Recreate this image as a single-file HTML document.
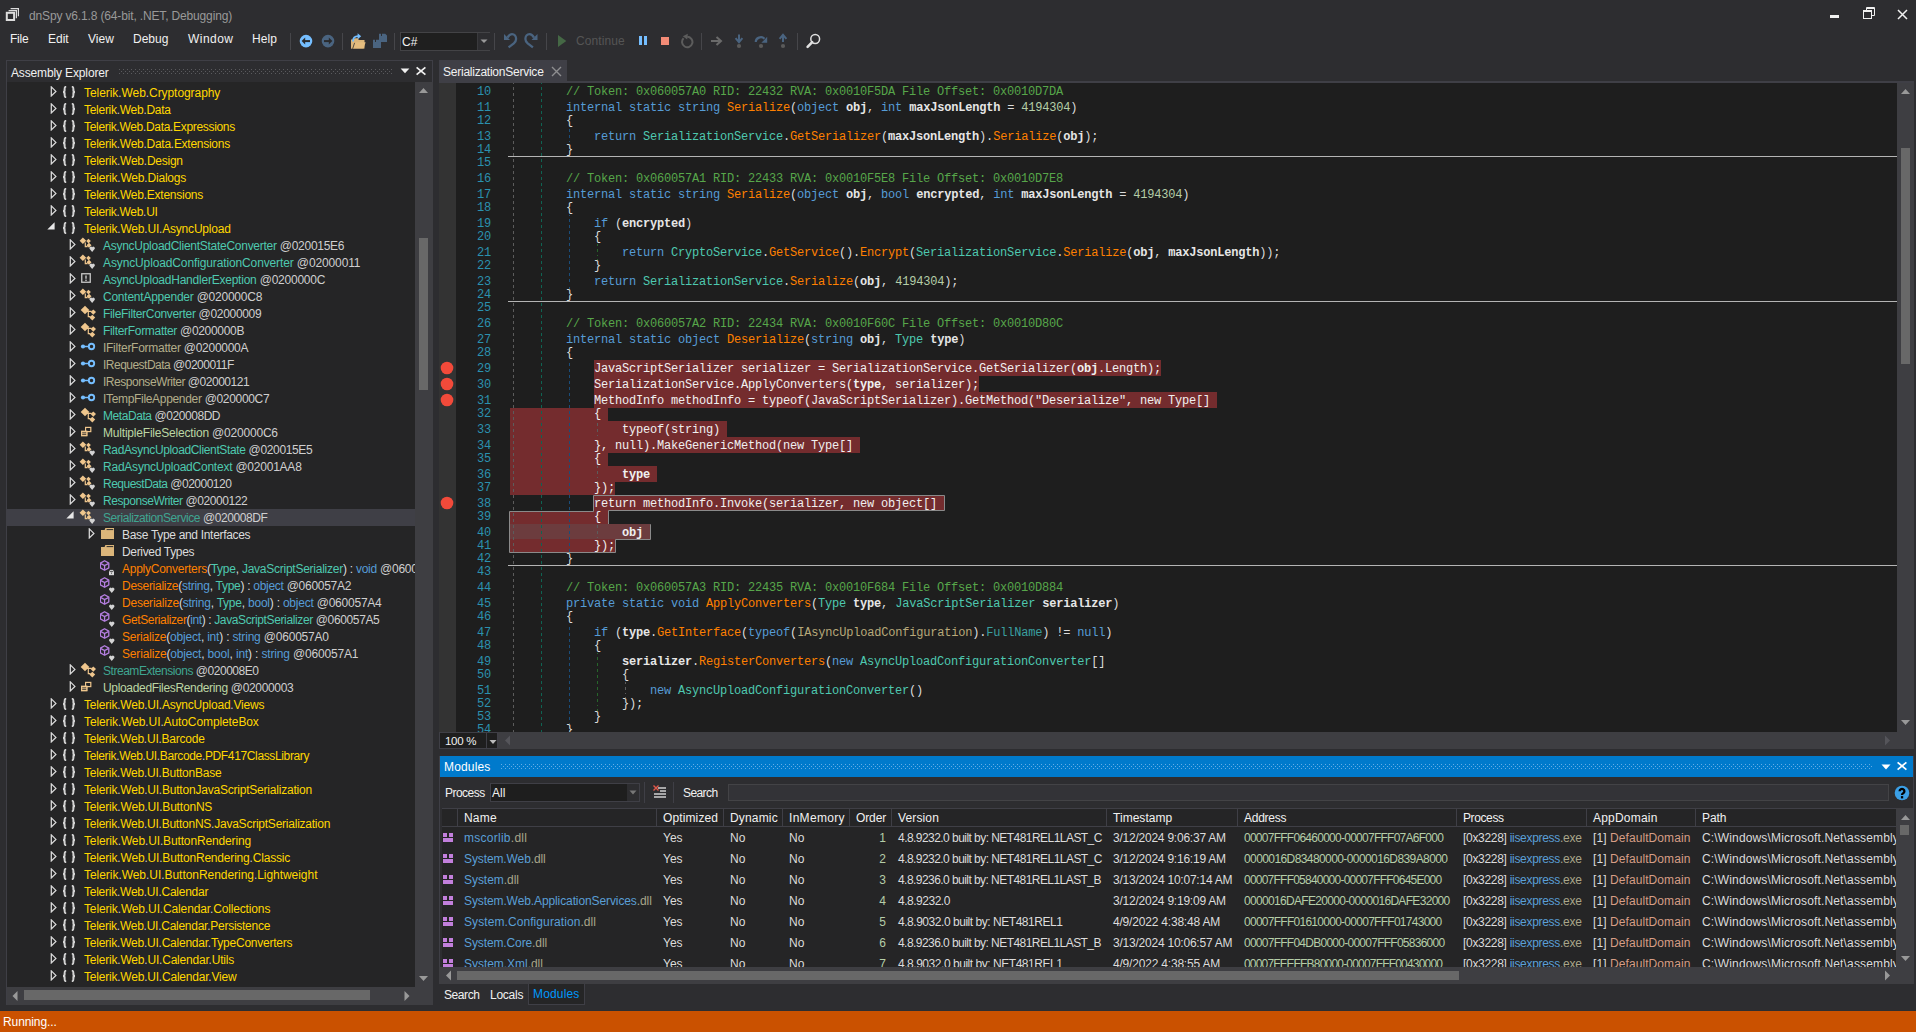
<!DOCTYPE html>
<html><head><meta charset="utf-8"><style>
html,body{margin:0;padding:0;}
body{width:1916px;height:1032px;overflow:hidden;position:relative;background:#2d2d30;font-family:'Liberation Sans', sans-serif;font-size:12px;}
div,svg{position:absolute;}
.t{white-space:pre;line-height:14px;}
</style></head><body>
<svg style="left:5px;top:7px;" width="16" height="16" viewBox="0 0 16 16"><path d="M3.6 3.6H11.4V11.2M5.6 1.6H13.4V9.2" fill="none" stroke="#dcdcdc" stroke-width="1.2"/><rect x="1.8" y="5.8" width="7.3" height="7.2" fill="none" stroke="#dcdcdc" stroke-width="2"/></svg><div class="t" style="top:9px;color:#999999;left:29px;letter-spacing:-0.151px;">dnSpy v6.1.8 (64-bit, .NET, Debugging)</div><div style="left:1830px;top:15px;width:9px;height:3px;background:#f1f1f1;"></div><svg style="left:1863px;top:7px;" width="12" height="12" viewBox="0 0 12 12"><path d="M3.5 3.5V0.5h8v8h-3" fill="none" stroke="#f1f1f1" stroke-width="1"/><rect x="0.5" y="3.5" width="8" height="8" fill="none" stroke="#f1f1f1" stroke-width="1"/><path d="M1 4.5h7M4 1.5h7" stroke="#f1f1f1" stroke-width="1"/></svg><svg style="left:1897px;top:9px;" width="11" height="11" viewBox="0 0 11 11"><path d="M1 1L10 10M10 1L1 10" stroke="#f1f1f1" stroke-width="1.5"/></svg><div class="t" style="top:32px;color:#f1f1f1;left:10px;letter-spacing:-0.212px;">File</div><div class="t" style="top:32px;color:#f1f1f1;left:48px;letter-spacing:-0.026px;">Edit</div><div class="t" style="top:32px;color:#f1f1f1;left:88px;letter-spacing:0.036px;">View</div><div class="t" style="top:32px;color:#f1f1f1;left:133px;letter-spacing:-0.015px;">Debug</div><div class="t" style="top:32px;color:#f1f1f1;left:188px;letter-spacing:0.464px;">Window</div><div class="t" style="top:32px;color:#f1f1f1;left:252px;letter-spacing:0.073px;">Help</div><div style="left:290px;top:33px;width:1px;height:17px;background:#46464a;"></div><div style="left:342px;top:33px;width:1px;height:17px;background:#46464a;"></div><div style="left:394px;top:33px;width:1px;height:17px;background:#46464a;"></div><div style="left:494px;top:33px;width:1px;height:17px;background:#46464a;"></div><div style="left:546px;top:33px;width:1px;height:17px;background:#46464a;"></div><div style="left:701px;top:33px;width:1px;height:17px;background:#46464a;"></div><div style="left:797px;top:33px;width:1px;height:17px;background:#46464a;"></div><svg style="left:299px;top:34px;" width="14" height="14" viewBox="0 0 14 14"><circle cx="7" cy="7.1" r="6.3" fill="#75beff"/><path d="M11 7.1H5" stroke="#2a2a2c" stroke-width="2"/><path d="M2.6 7.1L6.2 3.6V10.6z" fill="#2a2a2c"/></svg><svg style="left:321px;top:34px;" width="14" height="14" viewBox="0 0 14 14"><circle cx="7" cy="7.1" r="6.3" fill="#4a6480"/><path d="M3 7.1H9" stroke="#2a2a2c" stroke-width="2"/><path d="M11.4 7.1L7.8 3.6V10.6z" fill="#2a2a2c"/></svg><svg style="left:350px;top:32px;" width="17" height="18" viewBox="0 0 17 18"><path d="M1 7.5H3.5L5 6.2H8.5V8H14.5V16.5H1z" fill="#dcb67a"/><path d="M1.2 16.5L3.4 10.2H15.6L13.6 16.5z" fill="#e5bd7f"/><path d="M2.6 16.8L4.6 10.8" stroke="#2d2d30" stroke-width="0.8"/><path d="M3 9.5C3 6 5 4.2 8.2 4.2" fill="none" stroke="#75beff" stroke-width="1.8"/><path d="M7.6 1.2L11.2 4.2L7.6 7.2z" fill="#75beff"/></svg><svg style="left:372px;top:33px;" width="17" height="17" viewBox="0 0 17 17"><path d="M7 0.8H9V3H10V0.8H13.2L15 2.6V9H7z" fill="#4a6480"/><path d="M1 6.8H3V9H4V6.8H7.2L9 8.6V15H1z" fill="#4a6480"/></svg><div style="left:400px;top:32px;width:88px;height:17px;background:#1f1f1f;border:1px solid #434346;"></div><div style="left:477px;top:33px;width:12px;height:17px;background:#2d2d30;border-left:1px solid #3a3a3d;"></div><svg style="left:480px;top:38px;" width="8" height="6" viewBox="0 0 8 6"><path d="M0.5 1.5h7L4 5z" fill="#999"/></svg><div class="t" style="top:35px;color:#f1f1f1;left:402px;">C#</div><svg style="left:502px;top:30px;" width="18" height="20" viewBox="0 0 18 20"><path d="M2 4V10H8z" fill="#4a6480"/><path d="M5.5 7.6C6.8 5.3 8.5 4.2 10 4.2C12.4 4.2 14.1 6.2 14.1 9C14.1 10.8 13.3 12 11.8 13.3L6.6 17.4" fill="none" stroke="#4a6480" stroke-width="2.3"/></svg><svg style="left:521px;top:30px;" width="18" height="20" viewBox="0 0 18 20"><g transform="translate(18,0) scale(-1,1)"><path d="M1.5 4V10H7.5z" fill="#4a6480"/><path d="M5 7.6C6.3 5.3 8 4.2 9.5 4.2C11.9 4.2 13.6 6.2 13.6 9C13.6 10.8 12.8 12 11.3 13.3L6.1 17.4" fill="none" stroke="#4a6480" stroke-width="2.3"/></g></svg><svg style="left:557px;top:35px;" width="10" height="12" viewBox="0 0 10 12"><path d="M1 0L9.3 6L1 12z" fill="#456845"/></svg><div class="t" style="top:34px;color:#555555;left:576px;letter-spacing:0.081px;">Continue</div><div style="left:639px;top:36px;width:3px;height:9px;background:#75beff;"></div><div style="left:644px;top:36px;width:3px;height:9px;background:#75beff;"></div><div style="left:661px;top:37px;width:8px;height:8px;background:#f38b76;"></div><svg style="left:680px;top:33px;" width="14" height="16" viewBox="0 0 14 16"><path d="M3.6 5.3A5.2 5.2 0 1 0 7.2 3.8" fill="none" stroke="#5c5c5c" stroke-width="2"/><path d="M7.8 0.8L2.8 3.3L7.2 6.6z" fill="#5c5c5c"/></svg><svg style="left:709px;top:35px;" width="15" height="12" viewBox="0 0 15 12"><path d="M2 6H11" stroke="#6a6a6a" stroke-width="2"/><path d="M7.5 2L12 6L7.5 10" fill="none" stroke="#6a6a6a" stroke-width="2"/></svg><svg style="left:733px;top:33px;" width="12" height="16" viewBox="0 0 12 16"><path d="M6 1.5V8" stroke="#4a6480" stroke-width="2"/><path d="M2.6 5.2L6 9.2L9.4 5.2" fill="none" stroke="#4a6480" stroke-width="2"/><circle cx="6" cy="13" r="2.1" fill="#5a5a5a"/></svg><svg style="left:753px;top:33px;" width="16" height="16" viewBox="0 0 16 16"><path d="M2.8 9A5 4.6 0 0 1 11.5 5.8" fill="none" stroke="#4a6480" stroke-width="2.2"/><path d="M14.2 3.8V9.8H8.4z" fill="#4a6480"/><circle cx="8" cy="13" r="2.1" fill="#5a5a5a"/></svg><svg style="left:777px;top:33px;" width="12" height="16" viewBox="0 0 12 16"><path d="M6 9V3" stroke="#4a6480" stroke-width="2"/><path d="M2.6 5.8L6 1.8L9.4 5.8" fill="none" stroke="#4a6480" stroke-width="2"/><circle cx="6" cy="13" r="2.1" fill="#5a5a5a"/></svg><svg style="left:805px;top:32px;" width="17" height="17" viewBox="0 0 17 17"><circle cx="10.2" cy="7" r="4.4" fill="none" stroke="#e0e0e0" stroke-width="1.5"/><path d="M7.2 10.2L2.6 14.8" stroke="#e0e0e0" stroke-width="2.6" stroke-linecap="round"/></svg><div style="left:6px;top:60px;width:426px;height:1px;background:#3f3f46;"></div><div style="left:6px;top:60px;width:1px;height:945px;background:#3f3f46;"></div><div style="left:7px;top:61px;width:425px;height:21px;background:#2d2d30;"></div><div class="t" style="top:66px;color:#f1f1f1;left:11px;letter-spacing:-0.139px;">Assembly Explorer</div><svg style="left:119px;top:69px" width="274" height="5"><defs><pattern id="gp1" width="4" height="4" patternUnits="userSpaceOnUse"><rect x="0" y="0" width="1" height="1" fill="#5a5a5e"/><rect x="2" y="2" width="1" height="1" fill="#5a5a5e"/></pattern></defs><rect width="274" height="5" fill="url(#gp1)"/></svg><svg style="left:400px;top:68px;" width="10" height="6" viewBox="0 0 10 6"><path d="M0.6 0.6h8.8L5 5.2z" fill="#f1f1f1"/></svg><svg style="left:415px;top:66px;" width="12" height="10" viewBox="0 0 12 10"><path d="M1.6 1.3L10.4 8.7M10.4 1.3L1.6 8.7" stroke="#f1f1f1" stroke-width="1.7"/></svg><div style="left:432px;top:60px;width:1px;height:22px;background:#3f3f46;"></div><div style="left:7px;top:82px;width:408px;height:905px;background:#252526;"></div><div style="left:415px;top:82px;width:18px;height:905px;background:#3e3e42;"></div><svg style="left:418px;top:86px;" width="11" height="8" viewBox="0 0 11 8"><path d="M1 7L5.5 2L10 7z" fill="#999999"/></svg><svg style="left:418px;top:975px;" width="11" height="8" viewBox="0 0 11 8"><path d="M1 1L5.5 6L10 1z" fill="#999999"/></svg><div style="left:419px;top:238px;width:9px;height:152px;background:#686868;"></div><div style="left:7px;top:987px;width:426px;height:18px;background:#3e3e42;"></div><svg style="left:11px;top:990px;" width="8" height="12" viewBox="0 0 8 12"><path d="M6.5 1L1.5 6L6.5 11z" fill="#999999"/></svg><svg style="left:403px;top:990px;" width="8" height="12" viewBox="0 0 8 12"><path d="M1.5 1L6.5 6L1.5 11z" fill="#999999"/></svg><div style="left:24px;top:990px;width:346px;height:10px;background:#686868;"></div><div style="left:7px;top:82px;width:408px;height:905px;overflow:hidden;"><div style="left:-7px;top:-82px;width:1px;height:1px;"><svg style="left:50px;top:86px;" width="7" height="11" viewBox="0 0 7 11"><path d="M1.3 0.9L5.9 5.4L1.3 9.9z" fill="none" stroke="#dcdcdc" stroke-width="1.25" stroke-linejoin="miter"/></svg><svg style="left:62px;top:86px;" width="14" height="12" viewBox="0 0 14 12"><path d="M4.2 0.8C2.6 0.8 2.6 1.5 2.6 3.2V4.6C2.6 5.6 2 6 1 6C2 6 2.6 6.4 2.6 7.4V8.8C2.6 10.5 2.6 11.2 4.2 11.2M9.8 0.8C11.4 0.8 11.4 1.5 11.4 3.2V4.6C11.4 5.6 12 6 13 6C12 6 11.4 6.4 11.4 7.4V8.8C11.4 10.5 11.4 11.2 9.8 11.2" fill="none" stroke="#d4d4d4" stroke-width="2.0"/></svg><div class="t" style="top:86px;color:#ffd700;left:84px;letter-spacing:-0.067px;">Telerik<span style="color:#c8c8c8">.</span>Web<span style="color:#c8c8c8">.</span>Cryptography</div><svg style="left:50px;top:103px;" width="7" height="11" viewBox="0 0 7 11"><path d="M1.3 0.9L5.9 5.4L1.3 9.9z" fill="none" stroke="#dcdcdc" stroke-width="1.25" stroke-linejoin="miter"/></svg><svg style="left:62px;top:103px;" width="14" height="12" viewBox="0 0 14 12"><path d="M4.2 0.8C2.6 0.8 2.6 1.5 2.6 3.2V4.6C2.6 5.6 2 6 1 6C2 6 2.6 6.4 2.6 7.4V8.8C2.6 10.5 2.6 11.2 4.2 11.2M9.8 0.8C11.4 0.8 11.4 1.5 11.4 3.2V4.6C11.4 5.6 12 6 13 6C12 6 11.4 6.4 11.4 7.4V8.8C11.4 10.5 11.4 11.2 9.8 11.2" fill="none" stroke="#d4d4d4" stroke-width="2.0"/></svg><div class="t" style="top:103px;color:#ffd700;left:84px;letter-spacing:-0.283px;">Telerik<span style="color:#c8c8c8">.</span>Web<span style="color:#c8c8c8">.</span>Data</div><svg style="left:50px;top:120px;" width="7" height="11" viewBox="0 0 7 11"><path d="M1.3 0.9L5.9 5.4L1.3 9.9z" fill="none" stroke="#dcdcdc" stroke-width="1.25" stroke-linejoin="miter"/></svg><svg style="left:62px;top:120px;" width="14" height="12" viewBox="0 0 14 12"><path d="M4.2 0.8C2.6 0.8 2.6 1.5 2.6 3.2V4.6C2.6 5.6 2 6 1 6C2 6 2.6 6.4 2.6 7.4V8.8C2.6 10.5 2.6 11.2 4.2 11.2M9.8 0.8C11.4 0.8 11.4 1.5 11.4 3.2V4.6C11.4 5.6 12 6 13 6C12 6 11.4 6.4 11.4 7.4V8.8C11.4 10.5 11.4 11.2 9.8 11.2" fill="none" stroke="#d4d4d4" stroke-width="2.0"/></svg><div class="t" style="top:120px;color:#ffd700;left:84px;letter-spacing:-0.32px;">Telerik<span style="color:#c8c8c8">.</span>Web<span style="color:#c8c8c8">.</span>Data<span style="color:#c8c8c8">.</span>Expressions</div><svg style="left:50px;top:137px;" width="7" height="11" viewBox="0 0 7 11"><path d="M1.3 0.9L5.9 5.4L1.3 9.9z" fill="none" stroke="#dcdcdc" stroke-width="1.25" stroke-linejoin="miter"/></svg><svg style="left:62px;top:137px;" width="14" height="12" viewBox="0 0 14 12"><path d="M4.2 0.8C2.6 0.8 2.6 1.5 2.6 3.2V4.6C2.6 5.6 2 6 1 6C2 6 2.6 6.4 2.6 7.4V8.8C2.6 10.5 2.6 11.2 4.2 11.2M9.8 0.8C11.4 0.8 11.4 1.5 11.4 3.2V4.6C11.4 5.6 12 6 13 6C12 6 11.4 6.4 11.4 7.4V8.8C11.4 10.5 11.4 11.2 9.8 11.2" fill="none" stroke="#d4d4d4" stroke-width="2.0"/></svg><div class="t" style="top:137px;color:#ffd700;left:84px;letter-spacing:-0.272px;">Telerik<span style="color:#c8c8c8">.</span>Web<span style="color:#c8c8c8">.</span>Data<span style="color:#c8c8c8">.</span>Extensions</div><svg style="left:50px;top:154px;" width="7" height="11" viewBox="0 0 7 11"><path d="M1.3 0.9L5.9 5.4L1.3 9.9z" fill="none" stroke="#dcdcdc" stroke-width="1.25" stroke-linejoin="miter"/></svg><svg style="left:62px;top:154px;" width="14" height="12" viewBox="0 0 14 12"><path d="M4.2 0.8C2.6 0.8 2.6 1.5 2.6 3.2V4.6C2.6 5.6 2 6 1 6C2 6 2.6 6.4 2.6 7.4V8.8C2.6 10.5 2.6 11.2 4.2 11.2M9.8 0.8C11.4 0.8 11.4 1.5 11.4 3.2V4.6C11.4 5.6 12 6 13 6C12 6 11.4 6.4 11.4 7.4V8.8C11.4 10.5 11.4 11.2 9.8 11.2" fill="none" stroke="#d4d4d4" stroke-width="2.0"/></svg><div class="t" style="top:154px;color:#ffd700;left:84px;letter-spacing:-0.244px;">Telerik<span style="color:#c8c8c8">.</span>Web<span style="color:#c8c8c8">.</span>Design</div><svg style="left:50px;top:171px;" width="7" height="11" viewBox="0 0 7 11"><path d="M1.3 0.9L5.9 5.4L1.3 9.9z" fill="none" stroke="#dcdcdc" stroke-width="1.25" stroke-linejoin="miter"/></svg><svg style="left:62px;top:171px;" width="14" height="12" viewBox="0 0 14 12"><path d="M4.2 0.8C2.6 0.8 2.6 1.5 2.6 3.2V4.6C2.6 5.6 2 6 1 6C2 6 2.6 6.4 2.6 7.4V8.8C2.6 10.5 2.6 11.2 4.2 11.2M9.8 0.8C11.4 0.8 11.4 1.5 11.4 3.2V4.6C11.4 5.6 12 6 13 6C12 6 11.4 6.4 11.4 7.4V8.8C11.4 10.5 11.4 11.2 9.8 11.2" fill="none" stroke="#d4d4d4" stroke-width="2.0"/></svg><div class="t" style="top:171px;color:#ffd700;left:84px;letter-spacing:-0.196px;">Telerik<span style="color:#c8c8c8">.</span>Web<span style="color:#c8c8c8">.</span>Dialogs</div><svg style="left:50px;top:188px;" width="7" height="11" viewBox="0 0 7 11"><path d="M1.3 0.9L5.9 5.4L1.3 9.9z" fill="none" stroke="#dcdcdc" stroke-width="1.25" stroke-linejoin="miter"/></svg><svg style="left:62px;top:188px;" width="14" height="12" viewBox="0 0 14 12"><path d="M4.2 0.8C2.6 0.8 2.6 1.5 2.6 3.2V4.6C2.6 5.6 2 6 1 6C2 6 2.6 6.4 2.6 7.4V8.8C2.6 10.5 2.6 11.2 4.2 11.2M9.8 0.8C11.4 0.8 11.4 1.5 11.4 3.2V4.6C11.4 5.6 12 6 13 6C12 6 11.4 6.4 11.4 7.4V8.8C11.4 10.5 11.4 11.2 9.8 11.2" fill="none" stroke="#d4d4d4" stroke-width="2.0"/></svg><div class="t" style="top:188px;color:#ffd700;left:84px;letter-spacing:-0.252px;">Telerik<span style="color:#c8c8c8">.</span>Web<span style="color:#c8c8c8">.</span>Extensions</div><svg style="left:50px;top:205px;" width="7" height="11" viewBox="0 0 7 11"><path d="M1.3 0.9L5.9 5.4L1.3 9.9z" fill="none" stroke="#dcdcdc" stroke-width="1.25" stroke-linejoin="miter"/></svg><svg style="left:62px;top:205px;" width="14" height="12" viewBox="0 0 14 12"><path d="M4.2 0.8C2.6 0.8 2.6 1.5 2.6 3.2V4.6C2.6 5.6 2 6 1 6C2 6 2.6 6.4 2.6 7.4V8.8C2.6 10.5 2.6 11.2 4.2 11.2M9.8 0.8C11.4 0.8 11.4 1.5 11.4 3.2V4.6C11.4 5.6 12 6 13 6C12 6 11.4 6.4 11.4 7.4V8.8C11.4 10.5 11.4 11.2 9.8 11.2" fill="none" stroke="#d4d4d4" stroke-width="2.0"/></svg><div class="t" style="top:205px;color:#ffd700;left:84px;letter-spacing:-0.308px;">Telerik<span style="color:#c8c8c8">.</span>Web<span style="color:#c8c8c8">.</span>UI</div><svg style="left:47px;top:222px;" width="8" height="8" viewBox="0 0 8 8"><path d="M7.6 0.3V7.6H0.3z" fill="#e8e8e8"/></svg><svg style="left:62px;top:222px;" width="14" height="12" viewBox="0 0 14 12"><path d="M4.2 0.8C2.6 0.8 2.6 1.5 2.6 3.2V4.6C2.6 5.6 2 6 1 6C2 6 2.6 6.4 2.6 7.4V8.8C2.6 10.5 2.6 11.2 4.2 11.2M9.8 0.8C11.4 0.8 11.4 1.5 11.4 3.2V4.6C11.4 5.6 12 6 13 6C12 6 11.4 6.4 11.4 7.4V8.8C11.4 10.5 11.4 11.2 9.8 11.2" fill="none" stroke="#d4d4d4" stroke-width="2.0"/></svg><div class="t" style="top:222px;color:#ffd700;left:84px;letter-spacing:-0.198px;">Telerik<span style="color:#c8c8c8">.</span>Web<span style="color:#c8c8c8">.</span>UI<span style="color:#c8c8c8">.</span>AsyncUpload</div><svg style="left:69px;top:239px;" width="7" height="11" viewBox="0 0 7 11"><path d="M1.3 0.9L5.9 5.4L1.3 9.9z" fill="none" stroke="#dcdcdc" stroke-width="1.25" stroke-linejoin="miter"/></svg><svg style="left:78px;top:236px;" width="20" height="17" viewBox="0 0 20 17"><path d="M4.9 1.4000000000000004L8.2 4.7L4.9 8.0L1.6000000000000005 4.7z" fill="#efc68d"/><path d="M10.5 2.8L12.8 5.1L10.5 7.3999999999999995L8.2 5.1z" fill="#efc68d"/><path d="M11 6.800000000000001L13.5 9.3L11 11.8L8.5 9.3z" fill="#efc68d"/><path d="M7.3 6.5V10.6H9.6" fill="none" stroke="#efc68d" stroke-width="1.2"/><path d="M14.15 15.9L11.700000000000001 13.0A1.45 1.45 0 0 1 14.15 11.3A1.45 1.45 0 0 1 16.6 13.0z" fill="#d4d4d4"/></svg><div class="t" style="top:239px;color:#f1f1f1;left:103px;letter-spacing:-0.271px;"><span style="color:#4ec9b0">AsyncUploadClientStateConverter</span> <span style="color:#cfcfcf">@020015E6</span></div><svg style="left:69px;top:256px;" width="7" height="11" viewBox="0 0 7 11"><path d="M1.3 0.9L5.9 5.4L1.3 9.9z" fill="none" stroke="#dcdcdc" stroke-width="1.25" stroke-linejoin="miter"/></svg><svg style="left:78px;top:253px;" width="20" height="17" viewBox="0 0 20 17"><path d="M4.9 1.4000000000000004L8.2 4.7L4.9 8.0L1.6000000000000005 4.7z" fill="#efc68d"/><path d="M10.5 2.8L12.8 5.1L10.5 7.3999999999999995L8.2 5.1z" fill="#efc68d"/><path d="M11 6.800000000000001L13.5 9.3L11 11.8L8.5 9.3z" fill="#efc68d"/><path d="M7.3 6.5V10.6H9.6" fill="none" stroke="#efc68d" stroke-width="1.2"/><path d="M14.15 15.9L11.700000000000001 13.0A1.45 1.45 0 0 1 14.15 11.3A1.45 1.45 0 0 1 16.6 13.0z" fill="#d4d4d4"/></svg><div class="t" style="top:256px;color:#f1f1f1;left:103px;letter-spacing:-0.126px;"><span style="color:#4ec9b0">AsyncUploadConfigurationConverter</span> <span style="color:#cfcfcf">@02000011</span></div><svg style="left:69px;top:273px;" width="7" height="11" viewBox="0 0 7 11"><path d="M1.3 0.9L5.9 5.4L1.3 9.9z" fill="none" stroke="#dcdcdc" stroke-width="1.25" stroke-linejoin="miter"/></svg><svg style="left:81px;top:273px;" width="11" height="11" viewBox="0 0 11 11"><rect x="0.75" y="0.75" width="8.5" height="8.5" fill="none" stroke="#c8c8c8" stroke-width="1.3"/><path d="M5 2.6v3.2" stroke="#c8c8c8" stroke-width="1.4"/><rect x="4.3" y="6.6" width="1.4" height="1.4" fill="#c8c8c8"/></svg><div class="t" style="top:273px;color:#f1f1f1;left:103px;letter-spacing:-0.226px;"><span style="color:#4ec9b0">AsyncUploadHandlerExeption</span> <span style="color:#cfcfcf">@0200000C</span></div><svg style="left:69px;top:290px;" width="7" height="11" viewBox="0 0 7 11"><path d="M1.3 0.9L5.9 5.4L1.3 9.9z" fill="none" stroke="#dcdcdc" stroke-width="1.25" stroke-linejoin="miter"/></svg><svg style="left:78px;top:287px;" width="20" height="17" viewBox="0 0 20 17"><path d="M4.9 1.4000000000000004L8.2 4.7L4.9 8.0L1.6000000000000005 4.7z" fill="#efc68d"/><path d="M10.5 2.8L12.8 5.1L10.5 7.3999999999999995L8.2 5.1z" fill="#efc68d"/><path d="M11 6.800000000000001L13.5 9.3L11 11.8L8.5 9.3z" fill="#efc68d"/><path d="M7.3 6.5V10.6H9.6" fill="none" stroke="#efc68d" stroke-width="1.2"/><path d="M14.15 15.9L11.700000000000001 13.0A1.45 1.45 0 0 1 14.15 11.3A1.45 1.45 0 0 1 16.6 13.0z" fill="#d4d4d4"/></svg><div class="t" style="top:290px;color:#f1f1f1;left:103px;letter-spacing:-0.236px;"><span style="color:#4ec9b0">ContentAppender</span> <span style="color:#cfcfcf">@020000C8</span></div><svg style="left:69px;top:307px;" width="7" height="11" viewBox="0 0 7 11"><path d="M1.3 0.9L5.9 5.4L1.3 9.9z" fill="none" stroke="#dcdcdc" stroke-width="1.25" stroke-linejoin="miter"/></svg><svg style="left:78px;top:304px;" width="20" height="17" viewBox="0 0 20 17"><path d="M7 1.7000000000000002L11.3 6L7 10.3L2.7 6z" fill="#efc68d"/><path d="M15.3 5.3999999999999995L18.0 8.1L15.3 10.8L12.600000000000001 8.1z" fill="#efc68d"/><path d="M14.3 10.7L17.2 13.6L14.3 16.5L11.4 13.6z" fill="#efc68d"/><path d="M9 7.3H13.5M10.3 7.3V12.6H12.5" fill="none" stroke="#efc68d" stroke-width="1.2"/></svg><div class="t" style="top:307px;color:#f1f1f1;left:103px;letter-spacing:-0.321px;"><span style="color:#4ec9b0">FileFilterConverter</span> <span style="color:#cfcfcf">@02000009</span></div><svg style="left:69px;top:324px;" width="7" height="11" viewBox="0 0 7 11"><path d="M1.3 0.9L5.9 5.4L1.3 9.9z" fill="none" stroke="#dcdcdc" stroke-width="1.25" stroke-linejoin="miter"/></svg><svg style="left:78px;top:321px;" width="20" height="17" viewBox="0 0 20 17"><path d="M7 1.7000000000000002L11.3 6L7 10.3L2.7 6z" fill="#efc68d"/><path d="M15.3 5.3999999999999995L18.0 8.1L15.3 10.8L12.600000000000001 8.1z" fill="#efc68d"/><path d="M14.3 10.7L17.2 13.6L14.3 16.5L11.4 13.6z" fill="#efc68d"/><path d="M9 7.3H13.5M10.3 7.3V12.6H12.5" fill="none" stroke="#efc68d" stroke-width="1.2"/></svg><div class="t" style="top:324px;color:#f1f1f1;left:103px;letter-spacing:-0.313px;"><span style="color:#4ec9b0">FilterFormatter</span> <span style="color:#cfcfcf">@0200000B</span></div><svg style="left:69px;top:341px;" width="7" height="11" viewBox="0 0 7 11"><path d="M1.3 0.9L5.9 5.4L1.3 9.9z" fill="none" stroke="#dcdcdc" stroke-width="1.25" stroke-linejoin="miter"/></svg><svg style="left:80px;top:341px;" width="16" height="11" viewBox="0 0 16 11"><circle cx="3" cy="5.5" r="2.1" fill="#75beff"/><path d="M4.5 5.5h4" stroke="#75beff" stroke-width="1.5"/><circle cx="11.5" cy="5.5" r="2.7" fill="none" stroke="#75beff" stroke-width="1.9"/></svg><div class="t" style="top:341px;color:#f1f1f1;left:103px;letter-spacing:-0.27px;"><span style="color:#b3ae8a">IFilterFormatter</span> <span style="color:#cfcfcf">@0200000A</span></div><svg style="left:69px;top:358px;" width="7" height="11" viewBox="0 0 7 11"><path d="M1.3 0.9L5.9 5.4L1.3 9.9z" fill="none" stroke="#dcdcdc" stroke-width="1.25" stroke-linejoin="miter"/></svg><svg style="left:80px;top:358px;" width="16" height="11" viewBox="0 0 16 11"><circle cx="3" cy="5.5" r="2.1" fill="#75beff"/><path d="M4.5 5.5h4" stroke="#75beff" stroke-width="1.5"/><circle cx="11.5" cy="5.5" r="2.7" fill="none" stroke="#75beff" stroke-width="1.9"/></svg><div class="t" style="top:358px;color:#f1f1f1;left:103px;letter-spacing:-0.512px;"><span style="color:#b3ae8a">IRequestData</span> <span style="color:#cfcfcf">@0200011F</span></div><svg style="left:69px;top:375px;" width="7" height="11" viewBox="0 0 7 11"><path d="M1.3 0.9L5.9 5.4L1.3 9.9z" fill="none" stroke="#dcdcdc" stroke-width="1.25" stroke-linejoin="miter"/></svg><svg style="left:80px;top:375px;" width="16" height="11" viewBox="0 0 16 11"><circle cx="3" cy="5.5" r="2.1" fill="#75beff"/><path d="M4.5 5.5h4" stroke="#75beff" stroke-width="1.5"/><circle cx="11.5" cy="5.5" r="2.7" fill="none" stroke="#75beff" stroke-width="1.9"/></svg><div class="t" style="top:375px;color:#f1f1f1;left:103px;letter-spacing:-0.477px;"><span style="color:#b3ae8a">IResponseWriter</span> <span style="color:#cfcfcf">@02000121</span></div><svg style="left:69px;top:392px;" width="7" height="11" viewBox="0 0 7 11"><path d="M1.3 0.9L5.9 5.4L1.3 9.9z" fill="none" stroke="#dcdcdc" stroke-width="1.25" stroke-linejoin="miter"/></svg><svg style="left:80px;top:392px;" width="16" height="11" viewBox="0 0 16 11"><circle cx="3" cy="5.5" r="2.1" fill="#75beff"/><path d="M4.5 5.5h4" stroke="#75beff" stroke-width="1.5"/><circle cx="11.5" cy="5.5" r="2.7" fill="none" stroke="#75beff" stroke-width="1.9"/></svg><div class="t" style="top:392px;color:#f1f1f1;left:103px;letter-spacing:-0.321px;"><span style="color:#b3ae8a">ITempFileAppender</span> <span style="color:#cfcfcf">@020000C7</span></div><svg style="left:69px;top:409px;" width="7" height="11" viewBox="0 0 7 11"><path d="M1.3 0.9L5.9 5.4L1.3 9.9z" fill="none" stroke="#dcdcdc" stroke-width="1.25" stroke-linejoin="miter"/></svg><svg style="left:78px;top:406px;" width="20" height="17" viewBox="0 0 20 17"><path d="M7 1.7000000000000002L11.3 6L7 10.3L2.7 6z" fill="#efc68d"/><path d="M15.3 5.3999999999999995L18.0 8.1L15.3 10.8L12.600000000000001 8.1z" fill="#efc68d"/><path d="M14.3 10.7L17.2 13.6L14.3 16.5L11.4 13.6z" fill="#efc68d"/><path d="M9 7.3H13.5M10.3 7.3V12.6H12.5" fill="none" stroke="#efc68d" stroke-width="1.2"/></svg><div class="t" style="top:409px;color:#f1f1f1;left:103px;letter-spacing:-0.436px;"><span style="color:#4ec9b0">MetaData</span> <span style="color:#cfcfcf">@020008DD</span></div><svg style="left:69px;top:426px;" width="7" height="11" viewBox="0 0 7 11"><path d="M1.3 0.9L5.9 5.4L1.3 9.9z" fill="none" stroke="#dcdcdc" stroke-width="1.25" stroke-linejoin="miter"/></svg><svg style="left:80px;top:423px;" width="16" height="17" viewBox="0 0 16 17"><rect x="5.6" y="4.4" width="5.2" height="4.2" fill="none" stroke="#efc68d" stroke-width="1.2"/><path d="M6.5 6.5h3.5" stroke="#252526" stroke-width="0.9"/><rect x="1.6" y="8.4" width="5.2" height="4.2" fill="#252526" stroke="#efc68d" stroke-width="1.2"/><rect x="1" y="7.8" width="6.4" height="5.4" fill="#efc68d"/><path d="M2.2 9.8h4M2.2 11.4h4" stroke="#252526" stroke-width="0.8"/><rect x="5" y="3.8" width="6.4" height="5.4" fill="#efc68d" opacity="0"/></svg><div class="t" style="top:426px;color:#f1f1f1;left:103px;letter-spacing:-0.198px;"><span style="color:#bcd6a4">MultipleFileSelection</span> <span style="color:#cfcfcf">@020000C6</span></div><svg style="left:69px;top:443px;" width="7" height="11" viewBox="0 0 7 11"><path d="M1.3 0.9L5.9 5.4L1.3 9.9z" fill="none" stroke="#dcdcdc" stroke-width="1.25" stroke-linejoin="miter"/></svg><svg style="left:78px;top:440px;" width="20" height="17" viewBox="0 0 20 17"><path d="M4.9 1.4000000000000004L8.2 4.7L4.9 8.0L1.6000000000000005 4.7z" fill="#efc68d"/><path d="M10.5 2.8L12.8 5.1L10.5 7.3999999999999995L8.2 5.1z" fill="#efc68d"/><path d="M11 6.800000000000001L13.5 9.3L11 11.8L8.5 9.3z" fill="#efc68d"/><path d="M7.3 6.5V10.6H9.6" fill="none" stroke="#efc68d" stroke-width="1.2"/><path d="M14.15 15.9L11.700000000000001 13.0A1.45 1.45 0 0 1 14.15 11.3A1.45 1.45 0 0 1 16.6 13.0z" fill="#d4d4d4"/></svg><div class="t" style="top:443px;color:#f1f1f1;left:103px;letter-spacing:-0.352px;"><span style="color:#4ec9b0">RadAsyncUploadClientState</span> <span style="color:#cfcfcf">@020015E5</span></div><svg style="left:69px;top:460px;" width="7" height="11" viewBox="0 0 7 11"><path d="M1.3 0.9L5.9 5.4L1.3 9.9z" fill="none" stroke="#dcdcdc" stroke-width="1.25" stroke-linejoin="miter"/></svg><svg style="left:78px;top:457px;" width="20" height="17" viewBox="0 0 20 17"><path d="M4.9 1.4000000000000004L8.2 4.7L4.9 8.0L1.6000000000000005 4.7z" fill="#efc68d"/><path d="M10.5 2.8L12.8 5.1L10.5 7.3999999999999995L8.2 5.1z" fill="#efc68d"/><path d="M11 6.800000000000001L13.5 9.3L11 11.8L8.5 9.3z" fill="#efc68d"/><path d="M7.3 6.5V10.6H9.6" fill="none" stroke="#efc68d" stroke-width="1.2"/><path d="M14.15 15.9L11.700000000000001 13.0A1.45 1.45 0 0 1 14.15 11.3A1.45 1.45 0 0 1 16.6 13.0z" fill="#d4d4d4"/></svg><div class="t" style="top:460px;color:#f1f1f1;left:103px;letter-spacing:-0.228px;"><span style="color:#4ec9b0">RadAsyncUploadContext</span> <span style="color:#cfcfcf">@02001AA8</span></div><svg style="left:69px;top:477px;" width="7" height="11" viewBox="0 0 7 11"><path d="M1.3 0.9L5.9 5.4L1.3 9.9z" fill="none" stroke="#dcdcdc" stroke-width="1.25" stroke-linejoin="miter"/></svg><svg style="left:78px;top:474px;" width="20" height="17" viewBox="0 0 20 17"><path d="M4.9 1.4000000000000004L8.2 4.7L4.9 8.0L1.6000000000000005 4.7z" fill="#efc68d"/><path d="M10.5 2.8L12.8 5.1L10.5 7.3999999999999995L8.2 5.1z" fill="#efc68d"/><path d="M11 6.800000000000001L13.5 9.3L11 11.8L8.5 9.3z" fill="#efc68d"/><path d="M7.3 6.5V10.6H9.6" fill="none" stroke="#efc68d" stroke-width="1.2"/><path d="M14.15 15.9L11.700000000000001 13.0A1.45 1.45 0 0 1 14.15 11.3A1.45 1.45 0 0 1 16.6 13.0z" fill="#d4d4d4"/></svg><div class="t" style="top:477px;color:#f1f1f1;left:103px;letter-spacing:-0.507px;"><span style="color:#4ec9b0">RequestData</span> <span style="color:#cfcfcf">@02000120</span></div><svg style="left:69px;top:494px;" width="7" height="11" viewBox="0 0 7 11"><path d="M1.3 0.9L5.9 5.4L1.3 9.9z" fill="none" stroke="#dcdcdc" stroke-width="1.25" stroke-linejoin="miter"/></svg><svg style="left:78px;top:491px;" width="20" height="17" viewBox="0 0 20 17"><path d="M4.9 1.4000000000000004L8.2 4.7L4.9 8.0L1.6000000000000005 4.7z" fill="#efc68d"/><path d="M10.5 2.8L12.8 5.1L10.5 7.3999999999999995L8.2 5.1z" fill="#efc68d"/><path d="M11 6.800000000000001L13.5 9.3L11 11.8L8.5 9.3z" fill="#efc68d"/><path d="M7.3 6.5V10.6H9.6" fill="none" stroke="#efc68d" stroke-width="1.2"/><path d="M14.15 15.9L11.700000000000001 13.0A1.45 1.45 0 0 1 14.15 11.3A1.45 1.45 0 0 1 16.6 13.0z" fill="#d4d4d4"/></svg><div class="t" style="top:494px;color:#f1f1f1;left:103px;letter-spacing:-0.44px;"><span style="color:#4ec9b0">ResponseWriter</span> <span style="color:#cfcfcf">@02000122</span></div><div style="left:7px;top:509px;width:408px;height:17px;background:#3f3f46;"></div><svg style="left:66px;top:511px;" width="8" height="8" viewBox="0 0 8 8"><path d="M7.6 0.3V7.6H0.3z" fill="#e8e8e8"/></svg><svg style="left:78px;top:508px;" width="20" height="17" viewBox="0 0 20 17"><path d="M4.9 1.4000000000000004L8.2 4.7L4.9 8.0L1.6000000000000005 4.7z" fill="#efc68d"/><path d="M10.5 2.8L12.8 5.1L10.5 7.3999999999999995L8.2 5.1z" fill="#efc68d"/><path d="M11 6.800000000000001L13.5 9.3L11 11.8L8.5 9.3z" fill="#efc68d"/><path d="M7.3 6.5V10.6H9.6" fill="none" stroke="#efc68d" stroke-width="1.2"/><path d="M14.15 15.9L11.700000000000001 13.0A1.45 1.45 0 0 1 14.15 11.3A1.45 1.45 0 0 1 16.6 13.0z" fill="#d4d4d4"/></svg><div class="t" style="top:511px;color:#f1f1f1;left:103px;letter-spacing:-0.415px;"><span style="color:#3fa591">SerializationService</span> <span style="color:#cfcfcf">@020008DF</span></div><svg style="left:88px;top:528px;" width="7" height="11" viewBox="0 0 7 11"><path d="M1.3 0.9L5.9 5.4L1.3 9.9z" fill="none" stroke="#dcdcdc" stroke-width="1.25" stroke-linejoin="miter"/></svg><svg style="left:100px;top:525px;" width="16" height="17" viewBox="0 0 16 17"><path d="M1 5H4.6L5.4 3H14V14H1z" fill="#dcb67a"/><path d="M6.6 4.6H13.2" stroke="#2a2a2a" stroke-width="1"/></svg><div class="t" style="top:528px;color:#dcdcdc;left:122px;letter-spacing:-0.317px;">Base Type and Interfaces</div><svg style="left:100px;top:542px;" width="16" height="17" viewBox="0 0 16 17"><path d="M1 5H4.6L5.4 3H14V14H1z" fill="#dcb67a"/><path d="M6.6 4.6H13.2" stroke="#2a2a2a" stroke-width="1"/></svg><div class="t" style="top:545px;color:#dcdcdc;left:122px;letter-spacing:-0.333px;">Derived Types</div><svg style="left:100px;top:559px;" width="16" height="17" viewBox="0 0 16 17"><path d="M4.6 1.7L8.8 4.1V8.9L4.6 11.3L0.4 8.9V4.1z" fill="none" stroke="#b57fe0" stroke-width="1.3" stroke-linejoin="round"/><path d="M0.9 4.6L4.6 6.6L8.3 4.6M4.6 6.6V11" fill="none" stroke="#b57fe0" stroke-width="1.3"/><rect x="9" y="12.3" width="5" height="3.9" fill="#d8d8d8"/><path d="M10 12.4V11.4H13V12.4" fill="none" stroke="#d8d8d8" stroke-width="1"/><path d="M10 12.6H13" stroke="#252526" stroke-width="0.6"/><rect x="11.1" y="13.7" width="0.9" height="0.9" fill="#252526"/></svg><div class="t" style="top:562px;color:#f1f1f1;left:122px;letter-spacing:-0.2506px;"><span style="color:#ff8000">ApplyConverters</span><span style="color:#dcdcdc">(</span><span style="color:#4ec9b0">Type</span><span style="color:#dcdcdc">, </span><span style="color:#4ec9b0">JavaScriptSerializer</span><span style="color:#dcdcdc">) : </span><span style="color:#569cd6">void</span> <span style="color:#cfcfcf">@060057A3</span></div><svg style="left:100px;top:576px;" width="16" height="17" viewBox="0 0 16 17"><path d="M4.6 1.7L8.8 4.1V8.9L4.6 11.3L0.4 8.9V4.1z" fill="none" stroke="#b57fe0" stroke-width="1.3" stroke-linejoin="round"/><path d="M0.9 4.6L4.6 6.6L8.3 4.6M4.6 6.6V11" fill="none" stroke="#b57fe0" stroke-width="1.3"/><path d="M11.75 16.9L9.3 14.0A1.45 1.45 0 0 1 11.75 12.3A1.45 1.45 0 0 1 14.2 14.0z" fill="#d4d4d4"/></svg><div class="t" style="top:579px;color:#f1f1f1;left:122px;letter-spacing:-0.282px;"><span style="color:#ff8000">Deserialize</span><span style="color:#dcdcdc">(</span><span style="color:#569cd6">string</span><span style="color:#dcdcdc">, </span><span style="color:#4ec9b0">Type</span><span style="color:#dcdcdc">) : </span><span style="color:#569cd6">object</span> <span style="color:#cfcfcf">@060057A2</span></div><svg style="left:100px;top:593px;" width="16" height="17" viewBox="0 0 16 17"><path d="M4.6 1.7L8.8 4.1V8.9L4.6 11.3L0.4 8.9V4.1z" fill="none" stroke="#b57fe0" stroke-width="1.3" stroke-linejoin="round"/><path d="M0.9 4.6L4.6 6.6L8.3 4.6M4.6 6.6V11" fill="none" stroke="#b57fe0" stroke-width="1.3"/><path d="M11.75 16.9L9.3 14.0A1.45 1.45 0 0 1 11.75 12.3A1.45 1.45 0 0 1 14.2 14.0z" fill="#d4d4d4"/></svg><div class="t" style="top:596px;color:#f1f1f1;left:122px;letter-spacing:-0.226px;"><span style="color:#ff8000">Deserialize</span><span style="color:#dcdcdc">(</span><span style="color:#569cd6">string</span><span style="color:#dcdcdc">, </span><span style="color:#4ec9b0">Type</span><span style="color:#dcdcdc">, </span><span style="color:#569cd6">bool</span><span style="color:#dcdcdc">) : </span><span style="color:#569cd6">object</span> <span style="color:#cfcfcf">@060057A4</span></div><svg style="left:100px;top:610px;" width="16" height="17" viewBox="0 0 16 17"><path d="M4.6 1.7L8.8 4.1V8.9L4.6 11.3L0.4 8.9V4.1z" fill="none" stroke="#b57fe0" stroke-width="1.3" stroke-linejoin="round"/><path d="M0.9 4.6L4.6 6.6L8.3 4.6M4.6 6.6V11" fill="none" stroke="#b57fe0" stroke-width="1.3"/><path d="M11.75 16.9L9.3 14.0A1.45 1.45 0 0 1 11.75 12.3A1.45 1.45 0 0 1 14.2 14.0z" fill="#d4d4d4"/></svg><div class="t" style="top:613px;color:#f1f1f1;left:122px;letter-spacing:-0.372px;"><span style="color:#ff8000">GetSerializer</span><span style="color:#dcdcdc">(</span><span style="color:#569cd6">int</span><span style="color:#dcdcdc">) : </span><span style="color:#4ec9b0">JavaScriptSerializer</span> <span style="color:#cfcfcf">@060057A5</span></div><svg style="left:100px;top:627px;" width="16" height="17" viewBox="0 0 16 17"><path d="M4.6 1.7L8.8 4.1V8.9L4.6 11.3L0.4 8.9V4.1z" fill="none" stroke="#b57fe0" stroke-width="1.3" stroke-linejoin="round"/><path d="M0.9 4.6L4.6 6.6L8.3 4.6M4.6 6.6V11" fill="none" stroke="#b57fe0" stroke-width="1.3"/><path d="M11.75 16.9L9.3 14.0A1.45 1.45 0 0 1 11.75 12.3A1.45 1.45 0 0 1 14.2 14.0z" fill="#d4d4d4"/></svg><div class="t" style="top:630px;color:#f1f1f1;left:122px;letter-spacing:-0.199px;"><span style="color:#ff8000">Serialize</span><span style="color:#dcdcdc">(</span><span style="color:#569cd6">object</span><span style="color:#dcdcdc">, </span><span style="color:#569cd6">int</span><span style="color:#dcdcdc">) : </span><span style="color:#569cd6">string</span> <span style="color:#cfcfcf">@060057A0</span></div><svg style="left:100px;top:644px;" width="16" height="17" viewBox="0 0 16 17"><path d="M4.6 1.7L8.8 4.1V8.9L4.6 11.3L0.4 8.9V4.1z" fill="none" stroke="#b57fe0" stroke-width="1.3" stroke-linejoin="round"/><path d="M0.9 4.6L4.6 6.6L8.3 4.6M4.6 6.6V11" fill="none" stroke="#b57fe0" stroke-width="1.3"/><path d="M11.75 16.9L9.3 14.0A1.45 1.45 0 0 1 11.75 12.3A1.45 1.45 0 0 1 14.2 14.0z" fill="#d4d4d4"/></svg><div class="t" style="top:647px;color:#f1f1f1;left:122px;letter-spacing:-0.174px;"><span style="color:#ff8000">Serialize</span><span style="color:#dcdcdc">(</span><span style="color:#569cd6">object</span><span style="color:#dcdcdc">, </span><span style="color:#569cd6">bool</span><span style="color:#dcdcdc">, </span><span style="color:#569cd6">int</span><span style="color:#dcdcdc">) : </span><span style="color:#569cd6">string</span> <span style="color:#cfcfcf">@060057A1</span></div><svg style="left:69px;top:664px;" width="7" height="11" viewBox="0 0 7 11"><path d="M1.3 0.9L5.9 5.4L1.3 9.9z" fill="none" stroke="#dcdcdc" stroke-width="1.25" stroke-linejoin="miter"/></svg><svg style="left:78px;top:661px;" width="20" height="17" viewBox="0 0 20 17"><path d="M7 1.7000000000000002L11.3 6L7 10.3L2.7 6z" fill="#efc68d"/><path d="M15.3 5.3999999999999995L18.0 8.1L15.3 10.8L12.600000000000001 8.1z" fill="#efc68d"/><path d="M14.3 10.7L17.2 13.6L14.3 16.5L11.4 13.6z" fill="#efc68d"/><path d="M9 7.3H13.5M10.3 7.3V12.6H12.5" fill="none" stroke="#efc68d" stroke-width="1.2"/></svg><div class="t" style="top:664px;color:#f1f1f1;left:103px;letter-spacing:-0.465px;"><span style="color:#3fa591">StreamExtensions</span> <span style="color:#cfcfcf">@020008E0</span></div><svg style="left:69px;top:681px;" width="7" height="11" viewBox="0 0 7 11"><path d="M1.3 0.9L5.9 5.4L1.3 9.9z" fill="none" stroke="#dcdcdc" stroke-width="1.25" stroke-linejoin="miter"/></svg><svg style="left:80px;top:678px;" width="16" height="17" viewBox="0 0 16 17"><rect x="5.6" y="4.4" width="5.2" height="4.2" fill="none" stroke="#efc68d" stroke-width="1.2"/><path d="M6.5 6.5h3.5" stroke="#252526" stroke-width="0.9"/><rect x="1.6" y="8.4" width="5.2" height="4.2" fill="#252526" stroke="#efc68d" stroke-width="1.2"/><rect x="1" y="7.8" width="6.4" height="5.4" fill="#efc68d"/><path d="M2.2 9.8h4M2.2 11.4h4" stroke="#252526" stroke-width="0.8"/><rect x="5" y="3.8" width="6.4" height="5.4" fill="#efc68d" opacity="0"/></svg><div class="t" style="top:681px;color:#f1f1f1;left:103px;letter-spacing:-0.332px;"><span style="color:#bcd6a4">UploadedFilesRendering</span> <span style="color:#cfcfcf">@02000003</span></div><svg style="left:50px;top:698px;" width="7" height="11" viewBox="0 0 7 11"><path d="M1.3 0.9L5.9 5.4L1.3 9.9z" fill="none" stroke="#dcdcdc" stroke-width="1.25" stroke-linejoin="miter"/></svg><svg style="left:62px;top:698px;" width="14" height="12" viewBox="0 0 14 12"><path d="M4.2 0.8C2.6 0.8 2.6 1.5 2.6 3.2V4.6C2.6 5.6 2 6 1 6C2 6 2.6 6.4 2.6 7.4V8.8C2.6 10.5 2.6 11.2 4.2 11.2M9.8 0.8C11.4 0.8 11.4 1.5 11.4 3.2V4.6C11.4 5.6 12 6 13 6C12 6 11.4 6.4 11.4 7.4V8.8C11.4 10.5 11.4 11.2 9.8 11.2" fill="none" stroke="#d4d4d4" stroke-width="2.0"/></svg><div class="t" style="top:698px;color:#ffd700;left:84px;letter-spacing:-0.212px;">Telerik<span style="color:#c8c8c8">.</span>Web<span style="color:#c8c8c8">.</span>UI<span style="color:#c8c8c8">.</span>AsyncUpload<span style="color:#c8c8c8">.</span>Views</div><svg style="left:50px;top:715px;" width="7" height="11" viewBox="0 0 7 11"><path d="M1.3 0.9L5.9 5.4L1.3 9.9z" fill="none" stroke="#dcdcdc" stroke-width="1.25" stroke-linejoin="miter"/></svg><svg style="left:62px;top:715px;" width="14" height="12" viewBox="0 0 14 12"><path d="M4.2 0.8C2.6 0.8 2.6 1.5 2.6 3.2V4.6C2.6 5.6 2 6 1 6C2 6 2.6 6.4 2.6 7.4V8.8C2.6 10.5 2.6 11.2 4.2 11.2M9.8 0.8C11.4 0.8 11.4 1.5 11.4 3.2V4.6C11.4 5.6 12 6 13 6C12 6 11.4 6.4 11.4 7.4V8.8C11.4 10.5 11.4 11.2 9.8 11.2" fill="none" stroke="#d4d4d4" stroke-width="2.0"/></svg><div class="t" style="top:715px;color:#ffd700;left:84px;letter-spacing:-0.105px;">Telerik<span style="color:#c8c8c8">.</span>Web<span style="color:#c8c8c8">.</span>UI<span style="color:#c8c8c8">.</span>AutoCompleteBox</div><svg style="left:50px;top:732px;" width="7" height="11" viewBox="0 0 7 11"><path d="M1.3 0.9L5.9 5.4L1.3 9.9z" fill="none" stroke="#dcdcdc" stroke-width="1.25" stroke-linejoin="miter"/></svg><svg style="left:62px;top:732px;" width="14" height="12" viewBox="0 0 14 12"><path d="M4.2 0.8C2.6 0.8 2.6 1.5 2.6 3.2V4.6C2.6 5.6 2 6 1 6C2 6 2.6 6.4 2.6 7.4V8.8C2.6 10.5 2.6 11.2 4.2 11.2M9.8 0.8C11.4 0.8 11.4 1.5 11.4 3.2V4.6C11.4 5.6 12 6 13 6C12 6 11.4 6.4 11.4 7.4V8.8C11.4 10.5 11.4 11.2 9.8 11.2" fill="none" stroke="#d4d4d4" stroke-width="2.0"/></svg><div class="t" style="top:732px;color:#ffd700;left:84px;letter-spacing:-0.24px;">Telerik<span style="color:#c8c8c8">.</span>Web<span style="color:#c8c8c8">.</span>UI<span style="color:#c8c8c8">.</span>Barcode</div><svg style="left:50px;top:749px;" width="7" height="11" viewBox="0 0 7 11"><path d="M1.3 0.9L5.9 5.4L1.3 9.9z" fill="none" stroke="#dcdcdc" stroke-width="1.25" stroke-linejoin="miter"/></svg><svg style="left:62px;top:749px;" width="14" height="12" viewBox="0 0 14 12"><path d="M4.2 0.8C2.6 0.8 2.6 1.5 2.6 3.2V4.6C2.6 5.6 2 6 1 6C2 6 2.6 6.4 2.6 7.4V8.8C2.6 10.5 2.6 11.2 4.2 11.2M9.8 0.8C11.4 0.8 11.4 1.5 11.4 3.2V4.6C11.4 5.6 12 6 13 6C12 6 11.4 6.4 11.4 7.4V8.8C11.4 10.5 11.4 11.2 9.8 11.2" fill="none" stroke="#d4d4d4" stroke-width="2.0"/></svg><div class="t" style="top:749px;color:#ffd700;left:84px;letter-spacing:-0.362px;">Telerik<span style="color:#c8c8c8">.</span>Web<span style="color:#c8c8c8">.</span>UI<span style="color:#c8c8c8">.</span>Barcode<span style="color:#c8c8c8">.</span>PDF417ClassLibrary</div><svg style="left:50px;top:766px;" width="7" height="11" viewBox="0 0 7 11"><path d="M1.3 0.9L5.9 5.4L1.3 9.9z" fill="none" stroke="#dcdcdc" stroke-width="1.25" stroke-linejoin="miter"/></svg><svg style="left:62px;top:766px;" width="14" height="12" viewBox="0 0 14 12"><path d="M4.2 0.8C2.6 0.8 2.6 1.5 2.6 3.2V4.6C2.6 5.6 2 6 1 6C2 6 2.6 6.4 2.6 7.4V8.8C2.6 10.5 2.6 11.2 4.2 11.2M9.8 0.8C11.4 0.8 11.4 1.5 11.4 3.2V4.6C11.4 5.6 12 6 13 6C12 6 11.4 6.4 11.4 7.4V8.8C11.4 10.5 11.4 11.2 9.8 11.2" fill="none" stroke="#d4d4d4" stroke-width="2.0"/></svg><div class="t" style="top:766px;color:#ffd700;left:84px;letter-spacing:-0.232px;">Telerik<span style="color:#c8c8c8">.</span>Web<span style="color:#c8c8c8">.</span>UI<span style="color:#c8c8c8">.</span>ButtonBase</div><svg style="left:50px;top:783px;" width="7" height="11" viewBox="0 0 7 11"><path d="M1.3 0.9L5.9 5.4L1.3 9.9z" fill="none" stroke="#dcdcdc" stroke-width="1.25" stroke-linejoin="miter"/></svg><svg style="left:62px;top:783px;" width="14" height="12" viewBox="0 0 14 12"><path d="M4.2 0.8C2.6 0.8 2.6 1.5 2.6 3.2V4.6C2.6 5.6 2 6 1 6C2 6 2.6 6.4 2.6 7.4V8.8C2.6 10.5 2.6 11.2 4.2 11.2M9.8 0.8C11.4 0.8 11.4 1.5 11.4 3.2V4.6C11.4 5.6 12 6 13 6C12 6 11.4 6.4 11.4 7.4V8.8C11.4 10.5 11.4 11.2 9.8 11.2" fill="none" stroke="#d4d4d4" stroke-width="2.0"/></svg><div class="t" style="top:783px;color:#ffd700;left:84px;letter-spacing:-0.212px;">Telerik<span style="color:#c8c8c8">.</span>Web<span style="color:#c8c8c8">.</span>UI<span style="color:#c8c8c8">.</span>ButtonJavaScriptSerialization</div><svg style="left:50px;top:800px;" width="7" height="11" viewBox="0 0 7 11"><path d="M1.3 0.9L5.9 5.4L1.3 9.9z" fill="none" stroke="#dcdcdc" stroke-width="1.25" stroke-linejoin="miter"/></svg><svg style="left:62px;top:800px;" width="14" height="12" viewBox="0 0 14 12"><path d="M4.2 0.8C2.6 0.8 2.6 1.5 2.6 3.2V4.6C2.6 5.6 2 6 1 6C2 6 2.6 6.4 2.6 7.4V8.8C2.6 10.5 2.6 11.2 4.2 11.2M9.8 0.8C11.4 0.8 11.4 1.5 11.4 3.2V4.6C11.4 5.6 12 6 13 6C12 6 11.4 6.4 11.4 7.4V8.8C11.4 10.5 11.4 11.2 9.8 11.2" fill="none" stroke="#d4d4d4" stroke-width="2.0"/></svg><div class="t" style="top:800px;color:#ffd700;left:84px;letter-spacing:-0.191px;">Telerik<span style="color:#c8c8c8">.</span>Web<span style="color:#c8c8c8">.</span>UI<span style="color:#c8c8c8">.</span>ButtonNS</div><svg style="left:50px;top:817px;" width="7" height="11" viewBox="0 0 7 11"><path d="M1.3 0.9L5.9 5.4L1.3 9.9z" fill="none" stroke="#dcdcdc" stroke-width="1.25" stroke-linejoin="miter"/></svg><svg style="left:62px;top:817px;" width="14" height="12" viewBox="0 0 14 12"><path d="M4.2 0.8C2.6 0.8 2.6 1.5 2.6 3.2V4.6C2.6 5.6 2 6 1 6C2 6 2.6 6.4 2.6 7.4V8.8C2.6 10.5 2.6 11.2 4.2 11.2M9.8 0.8C11.4 0.8 11.4 1.5 11.4 3.2V4.6C11.4 5.6 12 6 13 6C12 6 11.4 6.4 11.4 7.4V8.8C11.4 10.5 11.4 11.2 9.8 11.2" fill="none" stroke="#d4d4d4" stroke-width="2.0"/></svg><div class="t" style="top:817px;color:#ffd700;left:84px;letter-spacing:-0.237px;">Telerik<span style="color:#c8c8c8">.</span>Web<span style="color:#c8c8c8">.</span>UI<span style="color:#c8c8c8">.</span>ButtonNS<span style="color:#c8c8c8">.</span>JavaScriptSerialization</div><svg style="left:50px;top:834px;" width="7" height="11" viewBox="0 0 7 11"><path d="M1.3 0.9L5.9 5.4L1.3 9.9z" fill="none" stroke="#dcdcdc" stroke-width="1.25" stroke-linejoin="miter"/></svg><svg style="left:62px;top:834px;" width="14" height="12" viewBox="0 0 14 12"><path d="M4.2 0.8C2.6 0.8 2.6 1.5 2.6 3.2V4.6C2.6 5.6 2 6 1 6C2 6 2.6 6.4 2.6 7.4V8.8C2.6 10.5 2.6 11.2 4.2 11.2M9.8 0.8C11.4 0.8 11.4 1.5 11.4 3.2V4.6C11.4 5.6 12 6 13 6C12 6 11.4 6.4 11.4 7.4V8.8C11.4 10.5 11.4 11.2 9.8 11.2" fill="none" stroke="#d4d4d4" stroke-width="2.0"/></svg><div class="t" style="top:834px;color:#ffd700;left:84px;letter-spacing:-0.141px;">Telerik<span style="color:#c8c8c8">.</span>Web<span style="color:#c8c8c8">.</span>UI<span style="color:#c8c8c8">.</span>ButtonRendering</div><svg style="left:50px;top:851px;" width="7" height="11" viewBox="0 0 7 11"><path d="M1.3 0.9L5.9 5.4L1.3 9.9z" fill="none" stroke="#dcdcdc" stroke-width="1.25" stroke-linejoin="miter"/></svg><svg style="left:62px;top:851px;" width="14" height="12" viewBox="0 0 14 12"><path d="M4.2 0.8C2.6 0.8 2.6 1.5 2.6 3.2V4.6C2.6 5.6 2 6 1 6C2 6 2.6 6.4 2.6 7.4V8.8C2.6 10.5 2.6 11.2 4.2 11.2M9.8 0.8C11.4 0.8 11.4 1.5 11.4 3.2V4.6C11.4 5.6 12 6 13 6C12 6 11.4 6.4 11.4 7.4V8.8C11.4 10.5 11.4 11.2 9.8 11.2" fill="none" stroke="#d4d4d4" stroke-width="2.0"/></svg><div class="t" style="top:851px;color:#ffd700;left:84px;letter-spacing:-0.189px;">Telerik<span style="color:#c8c8c8">.</span>Web<span style="color:#c8c8c8">.</span>UI<span style="color:#c8c8c8">.</span>ButtonRendering<span style="color:#c8c8c8">.</span>Classic</div><svg style="left:50px;top:868px;" width="7" height="11" viewBox="0 0 7 11"><path d="M1.3 0.9L5.9 5.4L1.3 9.9z" fill="none" stroke="#dcdcdc" stroke-width="1.25" stroke-linejoin="miter"/></svg><svg style="left:62px;top:868px;" width="14" height="12" viewBox="0 0 14 12"><path d="M4.2 0.8C2.6 0.8 2.6 1.5 2.6 3.2V4.6C2.6 5.6 2 6 1 6C2 6 2.6 6.4 2.6 7.4V8.8C2.6 10.5 2.6 11.2 4.2 11.2M9.8 0.8C11.4 0.8 11.4 1.5 11.4 3.2V4.6C11.4 5.6 12 6 13 6C12 6 11.4 6.4 11.4 7.4V8.8C11.4 10.5 11.4 11.2 9.8 11.2" fill="none" stroke="#d4d4d4" stroke-width="2.0"/></svg><div class="t" style="top:868px;color:#ffd700;left:84px;letter-spacing:-0.045px;">Telerik<span style="color:#c8c8c8">.</span>Web<span style="color:#c8c8c8">.</span>UI<span style="color:#c8c8c8">.</span>ButtonRendering<span style="color:#c8c8c8">.</span>Lightweight</div><svg style="left:50px;top:885px;" width="7" height="11" viewBox="0 0 7 11"><path d="M1.3 0.9L5.9 5.4L1.3 9.9z" fill="none" stroke="#dcdcdc" stroke-width="1.25" stroke-linejoin="miter"/></svg><svg style="left:62px;top:885px;" width="14" height="12" viewBox="0 0 14 12"><path d="M4.2 0.8C2.6 0.8 2.6 1.5 2.6 3.2V4.6C2.6 5.6 2 6 1 6C2 6 2.6 6.4 2.6 7.4V8.8C2.6 10.5 2.6 11.2 4.2 11.2M9.8 0.8C11.4 0.8 11.4 1.5 11.4 3.2V4.6C11.4 5.6 12 6 13 6C12 6 11.4 6.4 11.4 7.4V8.8C11.4 10.5 11.4 11.2 9.8 11.2" fill="none" stroke="#d4d4d4" stroke-width="2.0"/></svg><div class="t" style="top:885px;color:#ffd700;left:84px;letter-spacing:-0.247px;">Telerik<span style="color:#c8c8c8">.</span>Web<span style="color:#c8c8c8">.</span>UI<span style="color:#c8c8c8">.</span>Calendar</div><svg style="left:50px;top:902px;" width="7" height="11" viewBox="0 0 7 11"><path d="M1.3 0.9L5.9 5.4L1.3 9.9z" fill="none" stroke="#dcdcdc" stroke-width="1.25" stroke-linejoin="miter"/></svg><svg style="left:62px;top:902px;" width="14" height="12" viewBox="0 0 14 12"><path d="M4.2 0.8C2.6 0.8 2.6 1.5 2.6 3.2V4.6C2.6 5.6 2 6 1 6C2 6 2.6 6.4 2.6 7.4V8.8C2.6 10.5 2.6 11.2 4.2 11.2M9.8 0.8C11.4 0.8 11.4 1.5 11.4 3.2V4.6C11.4 5.6 12 6 13 6C12 6 11.4 6.4 11.4 7.4V8.8C11.4 10.5 11.4 11.2 9.8 11.2" fill="none" stroke="#d4d4d4" stroke-width="2.0"/></svg><div class="t" style="top:902px;color:#ffd700;left:84px;letter-spacing:-0.144px;">Telerik<span style="color:#c8c8c8">.</span>Web<span style="color:#c8c8c8">.</span>UI<span style="color:#c8c8c8">.</span>Calendar<span style="color:#c8c8c8">.</span>Collections</div><svg style="left:50px;top:919px;" width="7" height="11" viewBox="0 0 7 11"><path d="M1.3 0.9L5.9 5.4L1.3 9.9z" fill="none" stroke="#dcdcdc" stroke-width="1.25" stroke-linejoin="miter"/></svg><svg style="left:62px;top:919px;" width="14" height="12" viewBox="0 0 14 12"><path d="M4.2 0.8C2.6 0.8 2.6 1.5 2.6 3.2V4.6C2.6 5.6 2 6 1 6C2 6 2.6 6.4 2.6 7.4V8.8C2.6 10.5 2.6 11.2 4.2 11.2M9.8 0.8C11.4 0.8 11.4 1.5 11.4 3.2V4.6C11.4 5.6 12 6 13 6C12 6 11.4 6.4 11.4 7.4V8.8C11.4 10.5 11.4 11.2 9.8 11.2" fill="none" stroke="#d4d4d4" stroke-width="2.0"/></svg><div class="t" style="top:919px;color:#ffd700;left:84px;letter-spacing:-0.262px;">Telerik<span style="color:#c8c8c8">.</span>Web<span style="color:#c8c8c8">.</span>UI<span style="color:#c8c8c8">.</span>Calendar<span style="color:#c8c8c8">.</span>Persistence</div><svg style="left:50px;top:936px;" width="7" height="11" viewBox="0 0 7 11"><path d="M1.3 0.9L5.9 5.4L1.3 9.9z" fill="none" stroke="#dcdcdc" stroke-width="1.25" stroke-linejoin="miter"/></svg><svg style="left:62px;top:936px;" width="14" height="12" viewBox="0 0 14 12"><path d="M4.2 0.8C2.6 0.8 2.6 1.5 2.6 3.2V4.6C2.6 5.6 2 6 1 6C2 6 2.6 6.4 2.6 7.4V8.8C2.6 10.5 2.6 11.2 4.2 11.2M9.8 0.8C11.4 0.8 11.4 1.5 11.4 3.2V4.6C11.4 5.6 12 6 13 6C12 6 11.4 6.4 11.4 7.4V8.8C11.4 10.5 11.4 11.2 9.8 11.2" fill="none" stroke="#d4d4d4" stroke-width="2.0"/></svg><div class="t" style="top:936px;color:#ffd700;left:84px;letter-spacing:-0.235px;">Telerik<span style="color:#c8c8c8">.</span>Web<span style="color:#c8c8c8">.</span>UI<span style="color:#c8c8c8">.</span>Calendar<span style="color:#c8c8c8">.</span>TypeConverters</div><svg style="left:50px;top:953px;" width="7" height="11" viewBox="0 0 7 11"><path d="M1.3 0.9L5.9 5.4L1.3 9.9z" fill="none" stroke="#dcdcdc" stroke-width="1.25" stroke-linejoin="miter"/></svg><svg style="left:62px;top:953px;" width="14" height="12" viewBox="0 0 14 12"><path d="M4.2 0.8C2.6 0.8 2.6 1.5 2.6 3.2V4.6C2.6 5.6 2 6 1 6C2 6 2.6 6.4 2.6 7.4V8.8C2.6 10.5 2.6 11.2 4.2 11.2M9.8 0.8C11.4 0.8 11.4 1.5 11.4 3.2V4.6C11.4 5.6 12 6 13 6C12 6 11.4 6.4 11.4 7.4V8.8C11.4 10.5 11.4 11.2 9.8 11.2" fill="none" stroke="#d4d4d4" stroke-width="2.0"/></svg><div class="t" style="top:953px;color:#ffd700;left:84px;letter-spacing:-0.201px;">Telerik<span style="color:#c8c8c8">.</span>Web<span style="color:#c8c8c8">.</span>UI<span style="color:#c8c8c8">.</span>Calendar<span style="color:#c8c8c8">.</span>Utils</div><svg style="left:50px;top:970px;" width="7" height="11" viewBox="0 0 7 11"><path d="M1.3 0.9L5.9 5.4L1.3 9.9z" fill="none" stroke="#dcdcdc" stroke-width="1.25" stroke-linejoin="miter"/></svg><svg style="left:62px;top:970px;" width="14" height="12" viewBox="0 0 14 12"><path d="M4.2 0.8C2.6 0.8 2.6 1.5 2.6 3.2V4.6C2.6 5.6 2 6 1 6C2 6 2.6 6.4 2.6 7.4V8.8C2.6 10.5 2.6 11.2 4.2 11.2M9.8 0.8C11.4 0.8 11.4 1.5 11.4 3.2V4.6C11.4 5.6 12 6 13 6C12 6 11.4 6.4 11.4 7.4V8.8C11.4 10.5 11.4 11.2 9.8 11.2" fill="none" stroke="#d4d4d4" stroke-width="2.0"/></svg><div class="t" style="top:970px;color:#ffd700;left:84px;letter-spacing:-0.211px;">Telerik<span style="color:#c8c8c8">.</span>Web<span style="color:#c8c8c8">.</span>UI<span style="color:#c8c8c8">.</span>Calendar<span style="color:#c8c8c8">.</span>View</div></div></div><div style="left:415px;top:82px;width:18px;height:905px;background:#3e3e42;"></div><svg style="left:418px;top:86px;" width="11" height="8" viewBox="0 0 11 8"><path d="M1 7L5.5 2L10 7z" fill="#999999"/></svg><svg style="left:418px;top:975px;" width="11" height="8" viewBox="0 0 11 8"><path d="M1 1L5.5 6L10 1z" fill="#999999"/></svg><div style="left:419px;top:238px;width:9px;height:152px;background:#686868;"></div><div style="left:439px;top:60px;width:128px;height:21px;background:#3f3f46;"></div><div style="left:439px;top:81px;width:1475px;height:2px;background:#3f3f46;"></div><div class="t" style="top:65px;color:#f1f1f1;left:443px;letter-spacing:-0.241px;">SerializationService</div><svg style="left:551px;top:66px;" width="11" height="11" viewBox="0 0 11 11"><path d="M1 1L10 10M10 1L1 10" stroke="#8e8e90" stroke-width="1.4"/></svg><div style="left:439px;top:83px;width:17px;height:649px;background:#333333;"></div><div style="left:456px;top:83px;width:1441px;height:649px;background:#1e1e1e;"></div><div style="left:513px;top:83px;width:1px;height:649px;background:repeating-linear-gradient(to bottom,transparent 0,transparent 3px,#5c5c5c 3px,#5c5c5c 6px);background-position:0 -5px;"></div><div style="left:541px;top:83px;width:1px;height:649px;background:repeating-linear-gradient(to bottom,transparent 0,transparent 3px,#0f6352 3px,#0f6352 6px);background-position:0 -5px;"></div><div style="left:594px;top:360px;width:567px;height:16px;background:#742c2e;"></div><div style="left:594px;top:376px;width:385px;height:16px;background:#742c2e;"></div><div style="left:594px;top:392px;width:623px;height:16px;background:#742c2e;"></div><div style="left:510px;top:408px;width:98px;height:13px;background:#742c2e;"></div><div style="left:510px;top:421px;width:217px;height:16px;background:#742c2e;"></div><div style="left:510px;top:437px;width:350px;height:16px;background:#742c2e;"></div><div style="left:510px;top:453px;width:98px;height:13px;background:#742c2e;"></div><div style="left:510px;top:466px;width:147px;height:16px;background:#742c2e;"></div><div style="left:510px;top:482px;width:105px;height:13px;background:#742c2e;"></div><svg style="left:0;top:0" width="1916" height="1032"><path d="M593.5 495.5H944.5V510.5H608.5V524.5H650.5V539.5H615.5V552.5H509.5V511.5H593.5z" fill="#742c2e" stroke="#8a8a8a" stroke-width="1"/></svg><div style="left:510px;top:524px;width:140px;height:15px;background:#6c3c3e;"></div><div style="left:513px;top:83px;width:1px;height:649px;background:repeating-linear-gradient(to bottom,transparent 0,transparent 3px,#5c5c5c 3px,#5c5c5c 6px);background-position:0 -5px;"></div><div style="left:541px;top:83px;width:1px;height:649px;background:repeating-linear-gradient(to bottom,transparent 0,transparent 3px,#0f6352 3px,#0f6352 6px);background-position:0 -5px;"></div><div style="left:569px;top:128px;width:1px;height:16px;background:repeating-linear-gradient(to bottom,transparent 0,transparent 3px,#1a4d7a 3px,#1a4d7a 6px);background-position:0 -2px;"></div><div style="left:569px;top:215px;width:1px;height:74px;background:repeating-linear-gradient(to bottom,transparent 0,transparent 3px,#1a4d7a 3px,#1a4d7a 6px);background-position:0 -5px;"></div><div style="left:569px;top:360px;width:1px;height:193px;background:repeating-linear-gradient(to bottom,transparent 0,transparent 3px,#1a4d7a 3px,#1a4d7a 6px);background-position:0 0px;"></div><div style="left:569px;top:624px;width:1px;height:100px;background:repeating-linear-gradient(to bottom,transparent 0,transparent 3px,#1a4d7a 3px,#1a4d7a 6px);background-position:0 0px;"></div><div style="left:597px;top:244px;width:1px;height:16px;background:repeating-linear-gradient(to bottom,transparent 0,transparent 3px,#26662a 3px,#26662a 6px);background-position:0 -4px;"></div><div style="left:597px;top:421px;width:1px;height:16px;background:repeating-linear-gradient(to bottom,transparent 0,transparent 3px,#5c5c5c 3px,#5c5c5c 6px);background-position:0 -1px;"></div><div style="left:597px;top:466px;width:1px;height:16px;background:repeating-linear-gradient(to bottom,transparent 0,transparent 3px,#5c5c5c 3px,#5c5c5c 6px);background-position:0 -4px;"></div><div style="left:597px;top:524px;width:1px;height:16px;background:repeating-linear-gradient(to bottom,transparent 0,transparent 3px,#5c5c5c 3px,#5c5c5c 6px);background-position:0 -2px;"></div><div style="left:597px;top:653px;width:1px;height:58px;background:repeating-linear-gradient(to bottom,transparent 0,transparent 3px,#26662a 3px,#26662a 6px);background-position:0 -5px;"></div><div style="left:625px;top:682px;width:1px;height:16px;background:repeating-linear-gradient(to bottom,transparent 0,transparent 3px,#5c5c5c 3px,#5c5c5c 6px);background-position:0 -4px;"></div><div style="left:508px;top:156px;width:1389px;height:1px;background:#b4b4b4;"></div><div style="left:508px;top:301px;width:1389px;height:1px;background:#b4b4b4;"></div><div style="left:508px;top:565px;width:1389px;height:1px;background:#b4b4b4;"></div><svg style="left:440px;top:361px;" width="14" height="14" viewBox="0 0 14 14"><circle cx="7" cy="7" r="6.3" fill="#f24a3a"/></svg><svg style="left:440px;top:377px;" width="14" height="14" viewBox="0 0 14 14"><circle cx="7" cy="7" r="6.3" fill="#f24a3a"/></svg><svg style="left:440px;top:393px;" width="14" height="14" viewBox="0 0 14 14"><circle cx="7" cy="7" r="6.3" fill="#f24a3a"/></svg><svg style="left:440px;top:496px;" width="14" height="14" viewBox="0 0 14 14"><circle cx="7" cy="7" r="6.3" fill="#f24a3a"/></svg><div class="t" style="top:85px;color:#2b91af;right:1425px;font-family:'Liberation Mono', monospace;letter-spacing:-0.2px;">10</div><div class="t" style="top:85px;color:#f1f1f1;left:566px;font-family:'Liberation Mono', monospace;letter-spacing:-0.2px;"><span style="color:#57a64a">// Token: 0x060057A0 RID: 22432 RVA: 0x0010F5DA File Offset: 0x0010D7DA</span></div><div class="t" style="top:101px;color:#2b91af;right:1425px;font-family:'Liberation Mono', monospace;letter-spacing:-0.2px;">11</div><div class="t" style="top:101px;color:#f1f1f1;left:566px;font-family:'Liberation Mono', monospace;letter-spacing:-0.2px;"><span style="color:#569cd6">internal static string </span><span style="color:#ff8000">Serialize</span><span style="color:#dcdcdc">(</span><span style="color:#569cd6">object </span><b style="color:#e6e6e6">obj</b><span style="color:#dcdcdc">, </span><span style="color:#569cd6">int </span><b style="color:#e6e6e6">maxJsonLength</b><span style="color:#dcdcdc"> = </span><span style="color:#b5cea8">4194304</span><span style="color:#dcdcdc">)</span></div><div class="t" style="top:114px;color:#2b91af;right:1425px;font-family:'Liberation Mono', monospace;letter-spacing:-0.2px;">12</div><div class="t" style="top:114px;color:#f1f1f1;left:566px;font-family:'Liberation Mono', monospace;letter-spacing:-0.2px;"><span style="color:#dcdcdc">{</span></div><div class="t" style="top:130px;color:#2b91af;right:1425px;font-family:'Liberation Mono', monospace;letter-spacing:-0.2px;">13</div><div class="t" style="top:130px;color:#f1f1f1;left:594px;font-family:'Liberation Mono', monospace;letter-spacing:-0.2px;"><span style="color:#569cd6">return </span><span style="color:#4ec9b0">SerializationService</span><span style="color:#dcdcdc">.</span><span style="color:#ff8000">GetSerializer</span><span style="color:#dcdcdc">(</span><b style="color:#e6e6e6">maxJsonLength</b><span style="color:#dcdcdc">).</span><span style="color:#ff8000">Serialize</span><span style="color:#dcdcdc">(</span><b style="color:#e6e6e6">obj</b><span style="color:#dcdcdc">);</span></div><div class="t" style="top:143px;color:#2b91af;right:1425px;font-family:'Liberation Mono', monospace;letter-spacing:-0.2px;">14</div><div class="t" style="top:143px;color:#f1f1f1;left:566px;font-family:'Liberation Mono', monospace;letter-spacing:-0.2px;"><span style="color:#dcdcdc">}</span></div><div class="t" style="top:156px;color:#2b91af;right:1425px;font-family:'Liberation Mono', monospace;letter-spacing:-0.2px;">15</div><div class="t" style="top:172px;color:#2b91af;right:1425px;font-family:'Liberation Mono', monospace;letter-spacing:-0.2px;">16</div><div class="t" style="top:172px;color:#f1f1f1;left:566px;font-family:'Liberation Mono', monospace;letter-spacing:-0.2px;"><span style="color:#57a64a">// Token: 0x060057A1 RID: 22433 RVA: 0x0010F5E8 File Offset: 0x0010D7E8</span></div><div class="t" style="top:188px;color:#2b91af;right:1425px;font-family:'Liberation Mono', monospace;letter-spacing:-0.2px;">17</div><div class="t" style="top:188px;color:#f1f1f1;left:566px;font-family:'Liberation Mono', monospace;letter-spacing:-0.2px;"><span style="color:#569cd6">internal static string </span><span style="color:#ff8000">Serialize</span><span style="color:#dcdcdc">(</span><span style="color:#569cd6">object </span><b style="color:#e6e6e6">obj</b><span style="color:#dcdcdc">, </span><span style="color:#569cd6">bool </span><b style="color:#e6e6e6">encrypted</b><span style="color:#dcdcdc">, </span><span style="color:#569cd6">int </span><b style="color:#e6e6e6">maxJsonLength</b><span style="color:#dcdcdc"> = </span><span style="color:#b5cea8">4194304</span><span style="color:#dcdcdc">)</span></div><div class="t" style="top:201px;color:#2b91af;right:1425px;font-family:'Liberation Mono', monospace;letter-spacing:-0.2px;">18</div><div class="t" style="top:201px;color:#f1f1f1;left:566px;font-family:'Liberation Mono', monospace;letter-spacing:-0.2px;"><span style="color:#dcdcdc">{</span></div><div class="t" style="top:217px;color:#2b91af;right:1425px;font-family:'Liberation Mono', monospace;letter-spacing:-0.2px;">19</div><div class="t" style="top:217px;color:#f1f1f1;left:594px;font-family:'Liberation Mono', monospace;letter-spacing:-0.2px;"><span style="color:#569cd6">if</span><span style="color:#dcdcdc"> (</span><b style="color:#e6e6e6">encrypted</b><span style="color:#dcdcdc">)</span></div><div class="t" style="top:230px;color:#2b91af;right:1425px;font-family:'Liberation Mono', monospace;letter-spacing:-0.2px;">20</div><div class="t" style="top:230px;color:#f1f1f1;left:594px;font-family:'Liberation Mono', monospace;letter-spacing:-0.2px;"><span style="color:#dcdcdc">{</span></div><div class="t" style="top:246px;color:#2b91af;right:1425px;font-family:'Liberation Mono', monospace;letter-spacing:-0.2px;">21</div><div class="t" style="top:246px;color:#f1f1f1;left:622px;font-family:'Liberation Mono', monospace;letter-spacing:-0.2px;"><span style="color:#569cd6">return </span><span style="color:#4ec9b0">CryptoService</span><span style="color:#dcdcdc">.</span><span style="color:#ff8000">GetService</span><span style="color:#dcdcdc">().</span><span style="color:#ff8000">Encrypt</span><span style="color:#dcdcdc">(</span><span style="color:#4ec9b0">SerializationService</span><span style="color:#dcdcdc">.</span><span style="color:#ff8000">Serialize</span><span style="color:#dcdcdc">(</span><b style="color:#e6e6e6">obj</b><span style="color:#dcdcdc">, </span><b style="color:#e6e6e6">maxJsonLength</b><span style="color:#dcdcdc">));</span></div><div class="t" style="top:259px;color:#2b91af;right:1425px;font-family:'Liberation Mono', monospace;letter-spacing:-0.2px;">22</div><div class="t" style="top:259px;color:#f1f1f1;left:594px;font-family:'Liberation Mono', monospace;letter-spacing:-0.2px;"><span style="color:#dcdcdc">}</span></div><div class="t" style="top:275px;color:#2b91af;right:1425px;font-family:'Liberation Mono', monospace;letter-spacing:-0.2px;">23</div><div class="t" style="top:275px;color:#f1f1f1;left:594px;font-family:'Liberation Mono', monospace;letter-spacing:-0.2px;"><span style="color:#569cd6">return </span><span style="color:#4ec9b0">SerializationService</span><span style="color:#dcdcdc">.</span><span style="color:#ff8000">Serialize</span><span style="color:#dcdcdc">(</span><b style="color:#e6e6e6">obj</b><span style="color:#dcdcdc">, </span><span style="color:#b5cea8">4194304</span><span style="color:#dcdcdc">);</span></div><div class="t" style="top:288px;color:#2b91af;right:1425px;font-family:'Liberation Mono', monospace;letter-spacing:-0.2px;">24</div><div class="t" style="top:288px;color:#f1f1f1;left:566px;font-family:'Liberation Mono', monospace;letter-spacing:-0.2px;"><span style="color:#dcdcdc">}</span></div><div class="t" style="top:301px;color:#2b91af;right:1425px;font-family:'Liberation Mono', monospace;letter-spacing:-0.2px;">25</div><div class="t" style="top:317px;color:#2b91af;right:1425px;font-family:'Liberation Mono', monospace;letter-spacing:-0.2px;">26</div><div class="t" style="top:317px;color:#f1f1f1;left:566px;font-family:'Liberation Mono', monospace;letter-spacing:-0.2px;"><span style="color:#57a64a">// Token: 0x060057A2 RID: 22434 RVA: 0x0010F60C File Offset: 0x0010D80C</span></div><div class="t" style="top:333px;color:#2b91af;right:1425px;font-family:'Liberation Mono', monospace;letter-spacing:-0.2px;">27</div><div class="t" style="top:333px;color:#f1f1f1;left:566px;font-family:'Liberation Mono', monospace;letter-spacing:-0.2px;"><span style="color:#569cd6">internal static object </span><span style="color:#ff8000">Deserialize</span><span style="color:#dcdcdc">(</span><span style="color:#569cd6">string </span><b style="color:#e6e6e6">obj</b><span style="color:#dcdcdc">, </span><span style="color:#4ec9b0">Type </span><b style="color:#e6e6e6">type</b><span style="color:#dcdcdc">)</span></div><div class="t" style="top:346px;color:#2b91af;right:1425px;font-family:'Liberation Mono', monospace;letter-spacing:-0.2px;">28</div><div class="t" style="top:346px;color:#f1f1f1;left:566px;font-family:'Liberation Mono', monospace;letter-spacing:-0.2px;"><span style="color:#dcdcdc">{</span></div><div class="t" style="top:362px;color:#2b91af;right:1425px;font-family:'Liberation Mono', monospace;letter-spacing:-0.2px;">29</div><div class="t" style="top:362px;color:#f1f1f1;left:594px;font-family:'Liberation Mono', monospace;letter-spacing:-0.2px;"><span style="color:#f0f0f0">JavaScriptSerializer serializer = SerializationService.GetSerializer(</span><b style="color:#f0f0f0">obj</b><span style="color:#f0f0f0">.Length);</span></div><div class="t" style="top:378px;color:#2b91af;right:1425px;font-family:'Liberation Mono', monospace;letter-spacing:-0.2px;">30</div><div class="t" style="top:378px;color:#f1f1f1;left:594px;font-family:'Liberation Mono', monospace;letter-spacing:-0.2px;"><span style="color:#f0f0f0">SerializationService.ApplyConverters(</span><b style="color:#f0f0f0">type</b><span style="color:#f0f0f0">, serializer);</span></div><div class="t" style="top:394px;color:#2b91af;right:1425px;font-family:'Liberation Mono', monospace;letter-spacing:-0.2px;">31</div><div class="t" style="top:394px;color:#f1f1f1;left:594px;font-family:'Liberation Mono', monospace;letter-spacing:-0.2px;"><span style="color:#f0f0f0">MethodInfo methodInfo = typeof(JavaScriptSerializer).GetMethod("Deserialize", new Type[]</span></div><div class="t" style="top:407px;color:#2b91af;right:1425px;font-family:'Liberation Mono', monospace;letter-spacing:-0.2px;">32</div><div class="t" style="top:407px;color:#f1f1f1;left:594px;font-family:'Liberation Mono', monospace;letter-spacing:-0.2px;"><span style="color:#f0f0f0">{</span></div><div class="t" style="top:423px;color:#2b91af;right:1425px;font-family:'Liberation Mono', monospace;letter-spacing:-0.2px;">33</div><div class="t" style="top:423px;color:#f1f1f1;left:622px;font-family:'Liberation Mono', monospace;letter-spacing:-0.2px;"><span style="color:#f0f0f0">typeof(string)</span></div><div class="t" style="top:439px;color:#2b91af;right:1425px;font-family:'Liberation Mono', monospace;letter-spacing:-0.2px;">34</div><div class="t" style="top:439px;color:#f1f1f1;left:594px;font-family:'Liberation Mono', monospace;letter-spacing:-0.2px;"><span style="color:#f0f0f0">}, null).MakeGenericMethod(new Type[]</span></div><div class="t" style="top:452px;color:#2b91af;right:1425px;font-family:'Liberation Mono', monospace;letter-spacing:-0.2px;">35</div><div class="t" style="top:452px;color:#f1f1f1;left:594px;font-family:'Liberation Mono', monospace;letter-spacing:-0.2px;"><span style="color:#f0f0f0">{</span></div><div class="t" style="top:468px;color:#2b91af;right:1425px;font-family:'Liberation Mono', monospace;letter-spacing:-0.2px;">36</div><div class="t" style="top:468px;color:#f1f1f1;left:622px;font-family:'Liberation Mono', monospace;letter-spacing:-0.2px;"><b style="color:#f0f0f0">type</b></div><div class="t" style="top:481px;color:#2b91af;right:1425px;font-family:'Liberation Mono', monospace;letter-spacing:-0.2px;">37</div><div class="t" style="top:481px;color:#f1f1f1;left:594px;font-family:'Liberation Mono', monospace;letter-spacing:-0.2px;"><span style="color:#f0f0f0">});</span></div><div class="t" style="top:497px;color:#2b91af;right:1425px;font-family:'Liberation Mono', monospace;letter-spacing:-0.2px;">38</div><div class="t" style="top:497px;color:#f1f1f1;left:594px;font-family:'Liberation Mono', monospace;letter-spacing:-0.2px;"><span style="color:#f0f0f0">return methodInfo.Invoke(serializer, new object[]</span></div><div class="t" style="top:510px;color:#2b91af;right:1425px;font-family:'Liberation Mono', monospace;letter-spacing:-0.2px;">39</div><div class="t" style="top:510px;color:#f1f1f1;left:594px;font-family:'Liberation Mono', monospace;letter-spacing:-0.2px;"><span style="color:#f0f0f0">{</span></div><div class="t" style="top:526px;color:#2b91af;right:1425px;font-family:'Liberation Mono', monospace;letter-spacing:-0.2px;">40</div><div class="t" style="top:526px;color:#f1f1f1;left:622px;font-family:'Liberation Mono', monospace;letter-spacing:-0.2px;"><b style="color:#f0f0f0">obj</b></div><div class="t" style="top:539px;color:#2b91af;right:1425px;font-family:'Liberation Mono', monospace;letter-spacing:-0.2px;">41</div><div class="t" style="top:539px;color:#f1f1f1;left:594px;font-family:'Liberation Mono', monospace;letter-spacing:-0.2px;"><span style="color:#f0f0f0">});</span></div><div class="t" style="top:552px;color:#2b91af;right:1425px;font-family:'Liberation Mono', monospace;letter-spacing:-0.2px;">42</div><div class="t" style="top:552px;color:#f1f1f1;left:566px;font-family:'Liberation Mono', monospace;letter-spacing:-0.2px;"><span style="color:#dcdcdc">}</span></div><div class="t" style="top:565px;color:#2b91af;right:1425px;font-family:'Liberation Mono', monospace;letter-spacing:-0.2px;">43</div><div class="t" style="top:581px;color:#2b91af;right:1425px;font-family:'Liberation Mono', monospace;letter-spacing:-0.2px;">44</div><div class="t" style="top:581px;color:#f1f1f1;left:566px;font-family:'Liberation Mono', monospace;letter-spacing:-0.2px;"><span style="color:#57a64a">// Token: 0x060057A3 RID: 22435 RVA: 0x0010F684 File Offset: 0x0010D884</span></div><div class="t" style="top:597px;color:#2b91af;right:1425px;font-family:'Liberation Mono', monospace;letter-spacing:-0.2px;">45</div><div class="t" style="top:597px;color:#f1f1f1;left:566px;font-family:'Liberation Mono', monospace;letter-spacing:-0.2px;"><span style="color:#569cd6">private static void </span><span style="color:#ff8000">ApplyConverters</span><span style="color:#dcdcdc">(</span><span style="color:#4ec9b0">Type </span><b style="color:#e6e6e6">type</b><span style="color:#dcdcdc">, </span><span style="color:#4ec9b0">JavaScriptSerializer </span><b style="color:#e6e6e6">serializer</b><span style="color:#dcdcdc">)</span></div><div class="t" style="top:610px;color:#2b91af;right:1425px;font-family:'Liberation Mono', monospace;letter-spacing:-0.2px;">46</div><div class="t" style="top:610px;color:#f1f1f1;left:566px;font-family:'Liberation Mono', monospace;letter-spacing:-0.2px;"><span style="color:#dcdcdc">{</span></div><div class="t" style="top:626px;color:#2b91af;right:1425px;font-family:'Liberation Mono', monospace;letter-spacing:-0.2px;">47</div><div class="t" style="top:626px;color:#f1f1f1;left:594px;font-family:'Liberation Mono', monospace;letter-spacing:-0.2px;"><span style="color:#569cd6">if</span><span style="color:#dcdcdc"> (</span><b style="color:#e6e6e6">type</b><span style="color:#dcdcdc">.</span><span style="color:#ff8000">GetInterface</span><span style="color:#dcdcdc">(</span><span style="color:#569cd6">typeof</span><span style="color:#dcdcdc">(</span><span style="color:#b8a97a">IAsyncUploadConfiguration</span><span style="color:#dcdcdc">).</span><span style="color:#3a9fa0">FullName</span><span style="color:#dcdcdc">) != </span><span style="color:#569cd6">null</span><span style="color:#dcdcdc">)</span></div><div class="t" style="top:639px;color:#2b91af;right:1425px;font-family:'Liberation Mono', monospace;letter-spacing:-0.2px;">48</div><div class="t" style="top:639px;color:#f1f1f1;left:594px;font-family:'Liberation Mono', monospace;letter-spacing:-0.2px;"><span style="color:#dcdcdc">{</span></div><div class="t" style="top:655px;color:#2b91af;right:1425px;font-family:'Liberation Mono', monospace;letter-spacing:-0.2px;">49</div><div class="t" style="top:655px;color:#f1f1f1;left:622px;font-family:'Liberation Mono', monospace;letter-spacing:-0.2px;"><b style="color:#e6e6e6">serializer</b><span style="color:#dcdcdc">.</span><span style="color:#ff8000">RegisterConverters</span><span style="color:#dcdcdc">(</span><span style="color:#569cd6">new </span><span style="color:#4ec9b0">AsyncUploadConfigurationConverter</span><span style="color:#dcdcdc">[]</span></div><div class="t" style="top:668px;color:#2b91af;right:1425px;font-family:'Liberation Mono', monospace;letter-spacing:-0.2px;">50</div><div class="t" style="top:668px;color:#f1f1f1;left:622px;font-family:'Liberation Mono', monospace;letter-spacing:-0.2px;"><span style="color:#dcdcdc">{</span></div><div class="t" style="top:684px;color:#2b91af;right:1425px;font-family:'Liberation Mono', monospace;letter-spacing:-0.2px;">51</div><div class="t" style="top:684px;color:#f1f1f1;left:650px;font-family:'Liberation Mono', monospace;letter-spacing:-0.2px;"><span style="color:#569cd6">new </span><span style="color:#4ec9b0">AsyncUploadConfigurationConverter</span><span style="color:#dcdcdc">()</span></div><div class="t" style="top:697px;color:#2b91af;right:1425px;font-family:'Liberation Mono', monospace;letter-spacing:-0.2px;">52</div><div class="t" style="top:697px;color:#f1f1f1;left:622px;font-family:'Liberation Mono', monospace;letter-spacing:-0.2px;"><span style="color:#dcdcdc">});</span></div><div class="t" style="top:710px;color:#2b91af;right:1425px;font-family:'Liberation Mono', monospace;letter-spacing:-0.2px;">53</div><div class="t" style="top:710px;color:#f1f1f1;left:594px;font-family:'Liberation Mono', monospace;letter-spacing:-0.2px;"><span style="color:#dcdcdc">}</span></div><div class="t" style="top:723px;color:#2b91af;right:1425px;font-family:'Liberation Mono', monospace;letter-spacing:-0.2px;">54</div><div class="t" style="top:723px;color:#f1f1f1;left:566px;font-family:'Liberation Mono', monospace;letter-spacing:-0.2px;"><span style="color:#dcdcdc">}</span></div><div style="left:1897px;top:83px;width:17px;height:649px;background:#3e3e42;"></div><svg style="left:1900px;top:87px;" width="11" height="8" viewBox="0 0 11 8"><path d="M1 7L5.5 2L10 7z" fill="#999999"/></svg><svg style="left:1900px;top:719px;" width="11" height="8" viewBox="0 0 11 8"><path d="M1 1L5.5 6L10 1z" fill="#999999"/></svg><div style="left:1901px;top:148px;width:9px;height:216px;background:#686868;"></div><div style="left:439px;top:732px;width:1475px;height:17px;background:#3e3e42;"></div><div style="left:439px;top:732px;width:59px;height:17px;background:#1e1e1e;box-sizing:border-box;border:1px solid #3f3f46;"></div><div style="left:486px;top:733px;width:1px;height:15px;background:#3f3f46;"></div><svg style="left:489px;top:739px;" width="8" height="6" viewBox="0 0 8 6"><path d="M0.5 1h7L4 5z" fill="#bbbbbb"/></svg><div class="t" style="top:734px;color:#f1f1f1;left:445px;font-size:11.5px;letter-spacing:-0.3px;">100 %</div><svg style="left:504px;top:735px;" width="7" height="11" viewBox="0 0 7 11"><path d="M6 0.5L1 5.5L6 10.5z" fill="#55555a"/></svg><svg style="left:1884px;top:735px;" width="7" height="11" viewBox="0 0 7 11"><path d="M1 0.5L6 5.5L1 10.5z" fill="#55555a"/></svg><div style="left:440px;top:756px;width:1473px;height:21px;background:#007acc;"></div><div style="left:439px;top:756px;width:1px;height:211px;background:#3f3f46;"></div><div style="left:1913px;top:756px;width:1px;height:211px;background:#3f3f46;"></div><div class="t" style="top:760px;color:#ffffff;left:444px;letter-spacing:0.157px;">Modules</div><svg style="left:501px;top:764px" width="1372" height="5"><defs><pattern id="gp2" width="4" height="4" patternUnits="userSpaceOnUse"><rect x="0" y="0" width="1" height="1" fill="#66ade6"/><rect x="2" y="2" width="1" height="1" fill="#66ade6"/></pattern></defs><rect width="1372" height="5" fill="url(#gp2)"/></svg><svg style="left:1881px;top:764px;" width="10" height="6" viewBox="0 0 10 6"><path d="M0.5 0.5h9L5 5.5z" fill="#ffffff"/></svg><svg style="left:1896px;top:761px;" width="12" height="10" viewBox="0 0 12 10"><path d="M1.6 1.3L10.4 8.7M10.4 1.3L1.6 8.7" stroke="#ffffff" stroke-width="1.7"/></svg><div style="left:440px;top:777px;width:1473px;height:31px;background:#2d2d30;"></div><div class="t" style="top:786px;color:#f1f1f1;left:445px;letter-spacing:-0.525px;">Process</div><div style="left:490px;top:783px;width:150px;height:19px;background:#1e1e1e;box-sizing:border-box;border:1px solid #3f3f46;"></div><div style="left:627px;top:784px;width:12px;height:17px;background:#2d2d30;"></div><svg style="left:629px;top:790px;" width="8" height="5" viewBox="0 0 8 5"><path d="M0.5 0.5h7L4 4.5z" fill="#777777"/></svg><div class="t" style="top:786px;color:#f1f1f1;left:492px;">All</div><div style="left:644px;top:782px;width:1px;height:21px;background:#3f3f46;"></div><svg style="left:652px;top:784px;" width="16" height="16" viewBox="0 0 16 16"><path d="M6 4h8M8 7h6M2 10h12M2 13h12" stroke="#d0d0d0" stroke-width="1.4"/><path d="M1.5 1.5L6.5 6.5M6.5 1.5L1.5 6.5" stroke="#e0584a" stroke-width="1.4"/></svg><div style="left:673px;top:782px;width:1px;height:21px;background:#3f3f46;"></div><div class="t" style="top:786px;color:#f1f1f1;left:683px;letter-spacing:-0.584px;">Search</div><div style="left:728px;top:784px;width:1161px;height:17px;background:#333337;box-sizing:border-box;border:1px solid #434346;"></div><svg style="left:1894px;top:785px;" width="16" height="16" viewBox="0 0 16 16"><circle cx="8" cy="8" r="7.3" fill="#3b9fe6"/><path d="M5.6 6.2a2.4 2.3 0 1 1 3.6 2c-0.9 0.5-1.2 0.9-1.2 1.8" fill="none" stroke="#000" stroke-width="2.3"/><rect x="6.9" y="11.1" width="2.3" height="2.3" fill="#000"/></svg><div style="left:442px;top:808px;width:1455px;height:159px;background:#252526;"></div><div style="left:442px;top:826px;width:1455px;height:1px;background:#3f3f46;"></div><div style="left:442px;top:808px;width:1455px;height:1px;background:#3f3f46;"></div><div style="left:457px;top:809px;width:1px;height:17px;background:#3f3f46;"></div><div style="left:656px;top:809px;width:1px;height:17px;background:#3f3f46;"></div><div style="left:723px;top:809px;width:1px;height:17px;background:#3f3f46;"></div><div style="left:782px;top:809px;width:1px;height:17px;background:#3f3f46;"></div><div style="left:849px;top:809px;width:1px;height:17px;background:#3f3f46;"></div><div style="left:891px;top:809px;width:1px;height:17px;background:#3f3f46;"></div><div style="left:1106px;top:809px;width:1px;height:17px;background:#3f3f46;"></div><div style="left:1237px;top:809px;width:1px;height:17px;background:#3f3f46;"></div><div style="left:1456px;top:809px;width:1px;height:17px;background:#3f3f46;"></div><div style="left:1586px;top:809px;width:1px;height:17px;background:#3f3f46;"></div><div style="left:1695px;top:809px;width:1px;height:17px;background:#3f3f46;"></div><div class="t" style="top:811px;color:#f1f1f1;left:464px;letter-spacing:0.197px;">Name</div><div class="t" style="top:811px;color:#f1f1f1;left:663px;letter-spacing:0.123px;">Optimized</div><div class="t" style="top:811px;color:#f1f1f1;left:730px;letter-spacing:0.171px;">Dynamic</div><div class="t" style="top:811px;color:#f1f1f1;left:789px;letter-spacing:0.308px;">InMemory</div><div class="t" style="top:811px;color:#f1f1f1;left:856px;letter-spacing:-0.118px;">Order</div><div class="t" style="top:811px;color:#f1f1f1;left:898px;letter-spacing:0.129px;">Version</div><div class="t" style="top:811px;color:#f1f1f1;left:1113px;letter-spacing:0.038px;">Timestamp</div><div class="t" style="top:811px;color:#f1f1f1;left:1244px;letter-spacing:-0.254px;">Address</div><div class="t" style="top:811px;color:#f1f1f1;left:1463px;letter-spacing:-0.391px;">Process</div><div class="t" style="top:811px;color:#f1f1f1;left:1593px;letter-spacing:0.2px;">AppDomain</div><div class="t" style="top:811px;color:#f1f1f1;left:1702px;letter-spacing:-0.095px;">Path</div><div style="left:439px;top:827px;width:1457px;height:140px;overflow:hidden;"><svg style="left:4px;top:6px" width="10" height="9" viewBox="0 0 10 9"><rect x="0" y="0" width="4" height="4" fill="#c27fdc"/><rect x="6" y="0" width="4" height="4" fill="#c27fdc"/><rect x="0" y="5" width="10" height="4" fill="#c27fdc"/></svg><div class="t" style="top:4px;color:#dcdcdc;left:25px;letter-spacing:0.263px;"><span style="color:#5a9fd6">mscorlib</span><span style="color:#a9a58a">.dll</span></div><div class="t" style="top:4px;color:#dcdcdc;left:224px;">Yes</div><div class="t" style="top:4px;color:#dcdcdc;left:291px;">No</div><div class="t" style="top:4px;color:#dcdcdc;left:350px;">No</div><div class="t" style="top:4px;color:#b5cea8;right:1010px;">1</div><div class="t" style="top:4px;color:#dcdcdc;left:459px;letter-spacing:-0.548px;">4.8.9232.0 built by: NET481REL1LAST_C</div><div class="t" style="top:4px;color:#dcdcdc;left:674px;letter-spacing:-0.231px;">3/12/2024 9:06:37 AM</div><div class="t" style="top:4px;color:#b5cea8;left:805px;letter-spacing:-0.737px;">00007FFF06460000-00007FFF07A6F000</div><div class="t" style="top:4px;color:#dcdcdc;left:1024px;letter-spacing:-0.3px;"><span style="color:#dcdcdc">[0x3228] </span><span style="color:#5a9fd6">iisexpress</span><span style="color:#a9a58a">.exe</span></div><div class="t" style="top:4px;color:#dcdcdc;left:1154px;letter-spacing:0.078px;"><span style="color:#dcdcdc">[1] </span><span style="color:#d69d85">DefaultDomain</span></div><div class="t" style="top:4px;color:#dcdcdc;left:1263px;letter-spacing:0.149px;">C:\Windows\Microsoft.Net\assembly\GAC_64\mscorlib</div><svg style="left:4px;top:27px" width="10" height="9" viewBox="0 0 10 9"><rect x="0" y="0" width="4" height="4" fill="#c27fdc"/><rect x="6" y="0" width="4" height="4" fill="#c27fdc"/><rect x="0" y="5" width="10" height="4" fill="#c27fdc"/></svg><div class="t" style="top:25px;color:#dcdcdc;left:25px;letter-spacing:-0.111px;"><span style="color:#5a9fd6">System.Web</span><span style="color:#a9a58a">.dll</span></div><div class="t" style="top:25px;color:#dcdcdc;left:224px;">Yes</div><div class="t" style="top:25px;color:#dcdcdc;left:291px;">No</div><div class="t" style="top:25px;color:#dcdcdc;left:350px;">No</div><div class="t" style="top:25px;color:#b5cea8;right:1010px;">2</div><div class="t" style="top:25px;color:#dcdcdc;left:459px;letter-spacing:-0.548px;">4.8.9232.0 built by: NET481REL1LAST_C</div><div class="t" style="top:25px;color:#dcdcdc;left:674px;letter-spacing:-0.231px;">3/12/2024 9:16:19 AM</div><div class="t" style="top:25px;color:#b5cea8;left:805px;letter-spacing:-0.59px;">0000016D83480000-0000016D839A8000</div><div class="t" style="top:25px;color:#dcdcdc;left:1024px;letter-spacing:-0.3px;"><span style="color:#dcdcdc">[0x3228] </span><span style="color:#5a9fd6">iisexpress</span><span style="color:#a9a58a">.exe</span></div><div class="t" style="top:25px;color:#dcdcdc;left:1154px;letter-spacing:0.078px;"><span style="color:#dcdcdc">[1] </span><span style="color:#d69d85">DefaultDomain</span></div><div class="t" style="top:25px;color:#dcdcdc;left:1263px;letter-spacing:0.149px;">C:\Windows\Microsoft.Net\assembly\GAC_64\mscorlib</div><svg style="left:4px;top:48px" width="10" height="9" viewBox="0 0 10 9"><rect x="0" y="0" width="4" height="4" fill="#c27fdc"/><rect x="6" y="0" width="4" height="4" fill="#c27fdc"/><rect x="0" y="5" width="10" height="4" fill="#c27fdc"/></svg><div class="t" style="top:46px;color:#dcdcdc;left:25px;letter-spacing:-0.05px;"><span style="color:#5a9fd6">System</span><span style="color:#a9a58a">.dll</span></div><div class="t" style="top:46px;color:#dcdcdc;left:224px;">Yes</div><div class="t" style="top:46px;color:#dcdcdc;left:291px;">No</div><div class="t" style="top:46px;color:#dcdcdc;left:350px;">No</div><div class="t" style="top:46px;color:#b5cea8;right:1010px;">3</div><div class="t" style="top:46px;color:#dcdcdc;left:459px;letter-spacing:-0.555px;">4.8.9236.0 built by: NET481REL1LAST_B</div><div class="t" style="top:46px;color:#dcdcdc;left:674px;letter-spacing:-0.228px;">3/13/2024 10:07:14 AM</div><div class="t" style="top:46px;color:#b5cea8;left:805px;letter-spacing:-0.77px;">00007FFF05840000-00007FFF0645E000</div><div class="t" style="top:46px;color:#dcdcdc;left:1024px;letter-spacing:-0.3px;"><span style="color:#dcdcdc">[0x3228] </span><span style="color:#5a9fd6">iisexpress</span><span style="color:#a9a58a">.exe</span></div><div class="t" style="top:46px;color:#dcdcdc;left:1154px;letter-spacing:0.078px;"><span style="color:#dcdcdc">[1] </span><span style="color:#d69d85">DefaultDomain</span></div><div class="t" style="top:46px;color:#dcdcdc;left:1263px;letter-spacing:0.149px;">C:\Windows\Microsoft.Net\assembly\GAC_64\mscorlib</div><svg style="left:4px;top:69px" width="10" height="9" viewBox="0 0 10 9"><rect x="0" y="0" width="4" height="4" fill="#c27fdc"/><rect x="6" y="0" width="4" height="4" fill="#c27fdc"/><rect x="0" y="5" width="10" height="4" fill="#c27fdc"/></svg><div class="t" style="top:67px;color:#dcdcdc;left:25px;letter-spacing:-0.103px;"><span style="color:#5a9fd6">System.Web.ApplicationServices</span><span style="color:#a9a58a">.dll</span></div><div class="t" style="top:67px;color:#dcdcdc;left:224px;">Yes</div><div class="t" style="top:67px;color:#dcdcdc;left:291px;">No</div><div class="t" style="top:67px;color:#dcdcdc;left:350px;">No</div><div class="t" style="top:67px;color:#b5cea8;right:1010px;">4</div><div class="t" style="top:67px;color:#dcdcdc;left:459px;letter-spacing:-0.48px;">4.8.9232.0</div><div class="t" style="top:67px;color:#dcdcdc;left:674px;letter-spacing:-0.231px;">3/12/2024 9:19:09 AM</div><div class="t" style="top:67px;color:#b5cea8;left:805px;letter-spacing:-0.684px;">0000016DAFE20000-0000016DAFE32000</div><div class="t" style="top:67px;color:#dcdcdc;left:1024px;letter-spacing:-0.3px;"><span style="color:#dcdcdc">[0x3228] </span><span style="color:#5a9fd6">iisexpress</span><span style="color:#a9a58a">.exe</span></div><div class="t" style="top:67px;color:#dcdcdc;left:1154px;letter-spacing:0.078px;"><span style="color:#dcdcdc">[1] </span><span style="color:#d69d85">DefaultDomain</span></div><div class="t" style="top:67px;color:#dcdcdc;left:1263px;letter-spacing:0.149px;">C:\Windows\Microsoft.Net\assembly\GAC_64\mscorlib</div><svg style="left:4px;top:90px" width="10" height="9" viewBox="0 0 10 9"><rect x="0" y="0" width="4" height="4" fill="#c27fdc"/><rect x="6" y="0" width="4" height="4" fill="#c27fdc"/><rect x="0" y="5" width="10" height="4" fill="#c27fdc"/></svg><div class="t" style="top:88px;color:#dcdcdc;left:25px;letter-spacing:0.084px;"><span style="color:#5a9fd6">System.Configuration</span><span style="color:#a9a58a">.dll</span></div><div class="t" style="top:88px;color:#dcdcdc;left:224px;">Yes</div><div class="t" style="top:88px;color:#dcdcdc;left:291px;">No</div><div class="t" style="top:88px;color:#dcdcdc;left:350px;">No</div><div class="t" style="top:88px;color:#b5cea8;right:1010px;">5</div><div class="t" style="top:88px;color:#dcdcdc;left:459px;letter-spacing:-0.463px;">4.8.9032.0 built by: NET481REL1</div><div class="t" style="top:88px;color:#dcdcdc;left:674px;letter-spacing:-0.195px;">4/9/2022 4:38:48 AM</div><div class="t" style="top:88px;color:#b5cea8;left:805px;letter-spacing:-0.728px;">00007FFF01610000-00007FFF01743000</div><div class="t" style="top:88px;color:#dcdcdc;left:1024px;letter-spacing:-0.3px;"><span style="color:#dcdcdc">[0x3228] </span><span style="color:#5a9fd6">iisexpress</span><span style="color:#a9a58a">.exe</span></div><div class="t" style="top:88px;color:#dcdcdc;left:1154px;letter-spacing:0.078px;"><span style="color:#dcdcdc">[1] </span><span style="color:#d69d85">DefaultDomain</span></div><div class="t" style="top:88px;color:#dcdcdc;left:1263px;letter-spacing:0.149px;">C:\Windows\Microsoft.Net\assembly\GAC_64\mscorlib</div><svg style="left:4px;top:111px" width="10" height="9" viewBox="0 0 10 9"><rect x="0" y="0" width="4" height="4" fill="#c27fdc"/><rect x="6" y="0" width="4" height="4" fill="#c27fdc"/><rect x="0" y="5" width="10" height="4" fill="#c27fdc"/></svg><div class="t" style="top:109px;color:#dcdcdc;left:25px;letter-spacing:-0.114px;"><span style="color:#5a9fd6">System.Core</span><span style="color:#a9a58a">.dll</span></div><div class="t" style="top:109px;color:#dcdcdc;left:224px;">Yes</div><div class="t" style="top:109px;color:#dcdcdc;left:291px;">No</div><div class="t" style="top:109px;color:#dcdcdc;left:350px;">No</div><div class="t" style="top:109px;color:#b5cea8;right:1010px;">6</div><div class="t" style="top:109px;color:#dcdcdc;left:459px;letter-spacing:-0.555px;">4.8.9236.0 built by: NET481REL1LAST_B</div><div class="t" style="top:109px;color:#dcdcdc;left:674px;letter-spacing:-0.228px;">3/13/2024 10:06:57 AM</div><div class="t" style="top:109px;color:#b5cea8;left:805px;letter-spacing:-0.741px;">00007FFF04DB0000-00007FFF05836000</div><div class="t" style="top:109px;color:#dcdcdc;left:1024px;letter-spacing:-0.3px;"><span style="color:#dcdcdc">[0x3228] </span><span style="color:#5a9fd6">iisexpress</span><span style="color:#a9a58a">.exe</span></div><div class="t" style="top:109px;color:#dcdcdc;left:1154px;letter-spacing:0.078px;"><span style="color:#dcdcdc">[1] </span><span style="color:#d69d85">DefaultDomain</span></div><div class="t" style="top:109px;color:#dcdcdc;left:1263px;letter-spacing:0.149px;">C:\Windows\Microsoft.Net\assembly\GAC_64\mscorlib</div><svg style="left:4px;top:132px" width="10" height="9" viewBox="0 0 10 9"><rect x="0" y="0" width="4" height="4" fill="#c27fdc"/><rect x="6" y="0" width="4" height="4" fill="#c27fdc"/><rect x="0" y="5" width="10" height="4" fill="#c27fdc"/></svg><div class="t" style="top:130px;color:#dcdcdc;left:25px;letter-spacing:-0.034px;"><span style="color:#5a9fd6">System.Xml</span><span style="color:#a9a58a">.dll</span></div><div class="t" style="top:130px;color:#dcdcdc;left:224px;">Yes</div><div class="t" style="top:130px;color:#dcdcdc;left:291px;">No</div><div class="t" style="top:130px;color:#dcdcdc;left:350px;">No</div><div class="t" style="top:130px;color:#b5cea8;right:1010px;">7</div><div class="t" style="top:130px;color:#dcdcdc;left:459px;letter-spacing:-0.463px;">4.8.9032.0 built by: NET481REL1</div><div class="t" style="top:130px;color:#dcdcdc;left:674px;letter-spacing:-0.195px;">4/9/2022 4:38:55 AM</div><div class="t" style="top:130px;color:#b5cea8;left:805px;letter-spacing:-0.807px;">00007FFEFFB80000-00007FFF00430000</div><div class="t" style="top:130px;color:#dcdcdc;left:1024px;letter-spacing:-0.3px;"><span style="color:#dcdcdc">[0x3228] </span><span style="color:#5a9fd6">iisexpress</span><span style="color:#a9a58a">.exe</span></div><div class="t" style="top:130px;color:#dcdcdc;left:1154px;letter-spacing:0.078px;"><span style="color:#dcdcdc">[1] </span><span style="color:#d69d85">DefaultDomain</span></div><div class="t" style="top:130px;color:#dcdcdc;left:1263px;letter-spacing:0.149px;">C:\Windows\Microsoft.Net\assembly\GAC_64\mscorlib</div></div><div style="left:1896px;top:808px;width:17px;height:159px;background:#3e3e42;"></div><svg style="left:1900px;top:813px;" width="11" height="8" viewBox="0 0 11 8"><path d="M1 7L5.5 2L10 7z" fill="#999999"/></svg><svg style="left:1900px;top:955px;" width="11" height="8" viewBox="0 0 11 8"><path d="M1 1L5.5 6L10 1z" fill="#999999"/></svg><div style="left:1900px;top:825px;width:9px;height:10px;background:#686868;"></div><div style="left:439px;top:967px;width:1475px;height:17px;background:#3e3e42;"></div><svg style="left:445px;top:970px;" width="7" height="11" viewBox="0 0 7 11"><path d="M6 0.5L1 5.5L6 10.5z" fill="#999999"/></svg><svg style="left:1884px;top:970px;" width="7" height="11" viewBox="0 0 7 11"><path d="M1 0.5L6 5.5L1 10.5z" fill="#999999"/></svg><div style="left:457px;top:971px;width:1002px;height:9px;background:#686868;"></div><div style="left:440px;top:984px;width:1473px;height:21px;background:#2d2d30;"></div><div style="left:528px;top:984px;width:57px;height:21px;background:#252526;box-sizing:border-box;border:1px solid #3f3f46;border-top:none;"></div><div class="t" style="top:988px;color:#f1f1f1;left:444px;letter-spacing:-0.424px;">Search</div><div class="t" style="top:988px;color:#f1f1f1;left:490px;letter-spacing:-0.258px;">Locals</div><div class="t" style="top:987px;color:#0097fb;left:533px;letter-spacing:0.157px;">Modules</div><div style="left:0px;top:1011px;width:1916px;height:21px;background:#ca5100;"></div><div class="t" style="top:1015px;color:#ffffff;left:3px;letter-spacing:-0.1px;">Running...</div>
</body></html>
